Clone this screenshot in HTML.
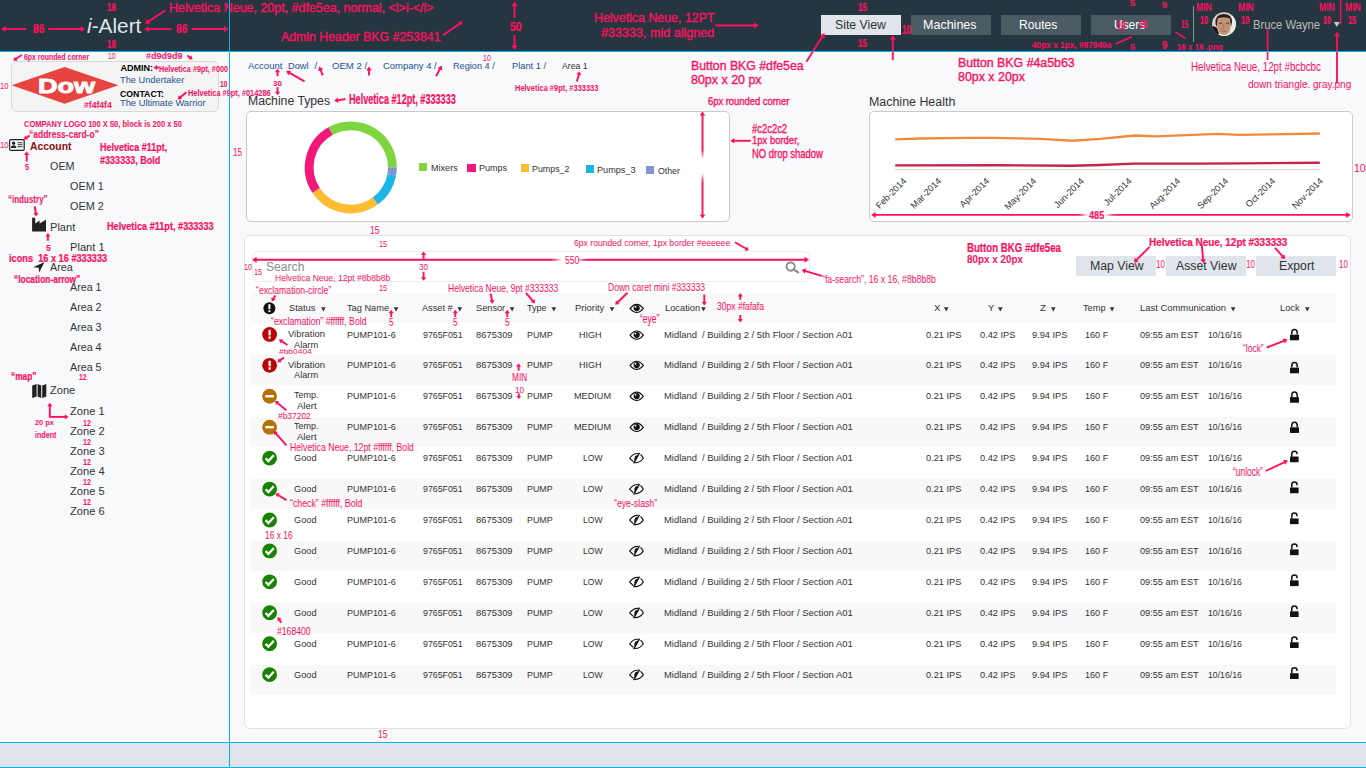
<!DOCTYPE html>
<html><head><meta charset="utf-8"><title>i-Alert redline</title>
<style>
html,body{margin:0;padding:0;width:1366px;height:768px;overflow:hidden;background:#f8f9fb;}
body{position:relative;font-family:"Liberation Sans",sans-serif;}
.t{position:absolute;white-space:pre;line-height:1;transform-origin:0 0;z-index:2;}
.b{position:absolute;}
.dow{-webkit-text-stroke:0.9px #fff;}
.med{-webkit-text-stroke:0.35px currentColor;}
.bd{-webkit-text-stroke:0.2px currentColor;}
svg.ov{position:absolute;left:0;top:0;width:1366px;height:768px;}

</style></head><body>
<svg class="ov" style="z-index:1" width="1366" height="768" viewBox="0 0 1366 768">
<defs><clipPath id="av"><circle cx="1224" cy="24.1" r="11.9"/></clipPath></defs>
<g clip-path="url(#av)">
<rect x="1211" y="11" width="27" height="27" fill="#d9d6d2"/>
<path d="M1236 12 L1236 36 L1230 36 L1231 16 Z" fill="#ecebe6"/>
<path d="M1211 27 Q1214 25 1217 28 L1220 37 L1211 37 Z" fill="#151515"/>
<path d="M1215.5 24 Q1214.5 14.5 1223.5 14 Q1232 14 1232 22 L1231 27 L1229.5 18.5 Q1224 16.5 1218 18.5 L1217 27 Z" fill="#2a1f1a"/>
<path d="M1217.5 19 Q1224 16.8 1230 19 L1230.5 27 Q1230 33.5 1224 35.5 Q1218 33.5 1217.3 27 Z" fill="#c39272"/>
<path d="M1219 23.3 h3.2 M1226 23.3 h3.2" stroke="#5a3f33" stroke-width="1.1"/>
<path d="M1223.8 24 L1223.2 28.5 L1225 28.6" fill="none" stroke="#a8735a" stroke-width="0.7"/>
<path d="M1221.5 31 Q1224 32 1226.5 31" fill="none" stroke="#9a5f4f" stroke-width="0.8"/>
<path d="M1217 37 L1219.5 33.5 Q1224 36.5 1229 33.5 L1231 37 Z" fill="#f4f4f2"/>
</g>
<polygon points="1333.8,22 1339.8,22 1336.8,27" fill="#c9c9c9"/>
<polygon points="11.6,85.3 64.6,66.9 118.4,85.3 64.6,103.8" fill="#e8433f"/>
<rect x="9.6" y="139.6" width="14.6" height="10.8" rx="1.2" fill="none" stroke="#222" stroke-width="1.2"/>
<circle cx="13.6" cy="143.2" r="1.6" fill="#222"/><path d="M10.9 148 Q11 145.3 13.6 145.3 Q16.2 145.3 16.3 148 Z" fill="#222"/>
<rect x="17.5" y="142.3" width="5" height="0.9" fill="#222"/><rect x="17.5" y="144.3" width="5" height="0.9" fill="#222"/><rect x="17.5" y="146.3" width="5" height="0.9" fill="#222"/>
<path d="M32.1 231.5 L32.1 217.8 L35.2 217.8 L35.2 223.5 L39.6 220.6 L39.6 223.5 L46 219.8 L46 231.5 Z" fill="#222"/>
<path d="M44.5 262 L33.2 267.2 L38.6 267.8 L39.2 272.6 Z" fill="#222"/>
<path d="M32.2 385.5 L36.6 384 L36.6 396.5 L32.2 398 Z M37.6 384 L41.2 385.4 L41.2 398 L37.6 396.6 Z M42.2 385.4 L46.3 384 L46.3 396.6 L42.2 398 Z" fill="#222"/>
<path d="M330.63 131.02 A41.6 41.6 0 0 1 392.40 167.40" fill="none" stroke="#7ed63f" stroke-width="8.8"/>
<path d="M392.40 167.40 A41.6 41.6 0 0 1 391.70 174.98" fill="none" stroke="#8294d2" stroke-width="8.8"/>
<path d="M391.70 174.98 A41.6 41.6 0 0 1 375.25 201.06" fill="none" stroke="#1cb6e6" stroke-width="8.8"/>
<path d="M375.25 201.06 A41.6 41.6 0 0 1 316.11 190.36" fill="none" stroke="#fcbd33" stroke-width="8.8"/>
<path d="M316.11 190.36 A41.6 41.6 0 0 1 330.63 131.02" fill="none" stroke="#f2187a" stroke-width="8.8"/>
<polyline points="895.2,139.4 920,138.5 969.3,137.9 993,137.9 1040.7,138.9 1072.7,140.7 1100,138.9 1135.2,135.5 1155.2,136.4 1218,133.9 1239,134.9 1319.8,133.5" fill="none" stroke="#f28a3e" stroke-width="2.4" stroke-linejoin="round"/>
<polyline points="895.2,165.4 1000,165.2 1072,165.8 1100,165 1134,163.6 1200,163.6 1240,163.4 1319.8,162.8" fill="none" stroke="#c4234a" stroke-width="2.4" stroke-linejoin="round"/>
<text x="903.5" y="176.7" transform="rotate(-45 903.5 176.7)" text-anchor="end" font-family="Liberation Sans" font-size="9.1" fill="#333" dx="-1" dy="6">Feb-2014</text>
<text x="938.3" y="176.7" transform="rotate(-45 938.3 176.7)" text-anchor="end" font-family="Liberation Sans" font-size="9.1" fill="#333" dx="-1" dy="6">Mar-2014</text>
<text x="986.3" y="176.7" transform="rotate(-45 986.3 176.7)" text-anchor="end" font-family="Liberation Sans" font-size="9.1" fill="#333" dx="-1" dy="6">Apr-2014</text>
<text x="1033.3" y="176.7" transform="rotate(-45 1033.3 176.7)" text-anchor="end" font-family="Liberation Sans" font-size="9.1" fill="#333" dx="-1" dy="6">May-2014</text>
<text x="1081.0" y="176.7" transform="rotate(-45 1081.0 176.7)" text-anchor="end" font-family="Liberation Sans" font-size="9.1" fill="#333" dx="-1" dy="6">Jun-2014</text>
<text x="1128.7" y="176.7" transform="rotate(-45 1128.7 176.7)" text-anchor="end" font-family="Liberation Sans" font-size="9.1" fill="#333" dx="-1" dy="6">Jul-2014</text>
<text x="1177.3" y="176.7" transform="rotate(-45 1177.3 176.7)" text-anchor="end" font-family="Liberation Sans" font-size="9.1" fill="#333" dx="-1" dy="6">Aug-2014</text>
<text x="1225.3" y="176.7" transform="rotate(-45 1225.3 176.7)" text-anchor="end" font-family="Liberation Sans" font-size="9.1" fill="#333" dx="-1" dy="6">Sep-2014</text>
<text x="1272.3" y="176.7" transform="rotate(-45 1272.3 176.7)" text-anchor="end" font-family="Liberation Sans" font-size="9.1" fill="#333" dx="-1" dy="6">Oct-2014</text>
<text x="1320.0" y="176.7" transform="rotate(-45 1320.0 176.7)" text-anchor="end" font-family="Liberation Sans" font-size="9.1" fill="#333" dx="-1" dy="6">Nov-2014</text>
<circle cx="790.6" cy="266.6" r="4.1" fill="none" stroke="#8b8b8b" stroke-width="1.9"/><line x1="793.6" y1="269.6" x2="798.2" y2="272.4" stroke="#8b8b8b" stroke-width="2.2" stroke-linecap="round"/>
<circle cx="269.4" cy="308.3" r="6" fill="#111"/><rect x="268.4" y="304.2" width="2" height="5" fill="#fff"/><rect x="268.4" y="310.3" width="2" height="1.8" fill="#fff"/>
<polygon points="321.1,307.2 325.7,307.2 323.4,311.4" fill="#333"/>
<polygon points="393.8,307.2 398.4,307.2 396.1,311.4" fill="#333"/>
<polygon points="457.5,307.2 462.1,307.2 459.8,311.4" fill="#333"/>
<polygon points="509.8,307.2 514.4,307.2 512.1,311.4" fill="#333"/>
<polygon points="551.5,307.2 556.1,307.2 553.8,311.4" fill="#333"/>
<polygon points="609.7,307.2 614.3,307.2 612.0,311.4" fill="#333"/>
<polygon points="701.2,307.2 705.8,307.2 703.5,311.4" fill="#333"/>
<polygon points="943.9,307.2 948.5,307.2 946.2,311.4" fill="#333"/>
<polygon points="998.0,307.2 1002.6,307.2 1000.3,311.4" fill="#333"/>
<polygon points="1051.0,307.2 1055.6,307.2 1053.3,311.4" fill="#333"/>
<polygon points="1109.8,307.2 1114.4,307.2 1112.1,311.4" fill="#333"/>
<polygon points="1230.8,307.2 1235.4,307.2 1233.1,311.4" fill="#333"/>
<polygon points="1305.0,307.2 1309.6,307.2 1307.3,311.4" fill="#333"/>
<path d="M630.1 308.4 Q636.7 300.2 643.3000000000001 308.4 Q636.7 316.59999999999997 630.1 308.4 Z" fill="none" stroke="#111" stroke-width="1.2"/><circle cx="636.7" cy="308.09999999999997" r="3.1" fill="#111"/><circle cx="635.5" cy="306.9" r="0.9" fill="#fff"/>
<circle cx="269.6" cy="334.40" r="7.4" fill="#bb0404"/><rect x="268.5" y="329.80" width="2.3" height="5.6" fill="#fff"/><rect x="268.5" y="336.40" width="2.3" height="2.3" fill="#fff"/>
<path d="M630.1 335.1 Q636.7 326.90000000000003 643.3000000000001 335.1 Q636.7 343.3 630.1 335.1 Z" fill="none" stroke="#111" stroke-width="1.2"/><circle cx="636.7" cy="334.8" r="3.1" fill="#111"/><circle cx="635.5" cy="333.6" r="0.9" fill="#fff"/>
<path d="M1291.8 334.50 L1291.8 332.70 Q1291.8 329.50 1294.5 329.50 Q1297.2 329.50 1297.2 332.70 L1297.2 334.50" fill="none" stroke="#111" stroke-width="1.5"/><rect x="1290" y="334.70" width="9" height="5.6" fill="#111"/>
<circle cx="269.6" cy="365.33" r="7.4" fill="#bb0404"/><rect x="268.5" y="360.73" width="2.3" height="5.6" fill="#fff"/><rect x="268.5" y="367.33" width="2.3" height="2.3" fill="#fff"/>
<path d="M630.1 365.36 Q636.7 357.16 643.3000000000001 365.36 Q636.7 373.56 630.1 365.36 Z" fill="none" stroke="#111" stroke-width="1.2"/><circle cx="636.7" cy="365.06" r="3.1" fill="#111"/><circle cx="635.5" cy="363.86" r="0.9" fill="#fff"/>
<path d="M1291.8 367.46 L1291.8 365.66 Q1291.8 362.46 1294.5 362.46 Q1297.2 362.46 1297.2 365.66 L1297.2 367.46" fill="none" stroke="#111" stroke-width="1.5"/><rect x="1290" y="367.66" width="9" height="5.6" fill="#111"/>
<circle cx="269.6" cy="396.26" r="7.4" fill="#b37202"/><rect x="265.4" y="395.06" width="8.4" height="2.4" fill="#fff"/>
<path d="M630.1 396.32000000000005 Q636.7 388.12000000000006 643.3000000000001 396.32000000000005 Q636.7 404.52000000000004 630.1 396.32000000000005 Z" fill="none" stroke="#111" stroke-width="1.2"/><circle cx="636.7" cy="396.02000000000004" r="3.1" fill="#111"/><circle cx="635.5" cy="394.82000000000005" r="0.9" fill="#fff"/>
<path d="M1291.8 396.92 L1291.8 395.12 Q1291.8 391.92 1294.5 391.92 Q1297.2 391.92 1297.2 395.12 L1297.2 396.92" fill="none" stroke="#111" stroke-width="1.5"/><rect x="1290" y="397.12" width="9" height="5.6" fill="#111"/>
<circle cx="269.6" cy="427.19" r="7.4" fill="#b37202"/><rect x="265.4" y="425.99" width="8.4" height="2.4" fill="#fff"/>
<path d="M630.1 427.28000000000003 Q636.7 419.08000000000004 643.3000000000001 427.28000000000003 Q636.7 435.48 630.1 427.28000000000003 Z" fill="none" stroke="#111" stroke-width="1.2"/><circle cx="636.7" cy="426.98" r="3.1" fill="#111"/><circle cx="635.5" cy="425.78000000000003" r="0.9" fill="#fff"/>
<path d="M1291.8 427.13 L1291.8 425.33 Q1291.8 422.13 1294.5 422.13 Q1297.2 422.13 1297.2 425.33 L1297.2 427.13" fill="none" stroke="#111" stroke-width="1.5"/><rect x="1290" y="427.33" width="9" height="5.6" fill="#111"/>
<circle cx="269.6" cy="458.12" r="7.4" fill="#168400"/><path d="M265.6 458.32 L268.4 461.12 L273.8 455.32" fill="none" stroke="#fff" stroke-width="2.3"/>
<path d="M637.90 453.54 Q633.20 453.24 629.70 458.24 L633.30 461.64 M640.50 454.54 Q642.30 455.84 643.30 458.24 Q639.70 463.14 634.50 462.74" fill="none" stroke="#111" stroke-width="1.15"/><path d="M639.50 452.84 L633.60 463.34" stroke="#111" stroke-width="1.4"/><path d="M635.50 455.64 Q633.30 458.24 634.60 461.04 L638.20 454.94 Z" fill="#111"/>
<path d="M1291.8 456.64 L1291.8 453.64 Q1291.8 451.14 1294.4 451.14 Q1297 451.14 1297 453.64 L1297 454.34" fill="none" stroke="#111" stroke-width="1.5"/><rect x="1290" y="456.54" width="8.6" height="5.7" fill="#111"/>
<circle cx="269.6" cy="489.05" r="7.4" fill="#168400"/><path d="M265.6 489.25 L268.4 492.05 L273.8 486.25" fill="none" stroke="#fff" stroke-width="2.3"/>
<path d="M637.90 484.50 Q633.20 484.20 629.70 489.20 L633.30 492.60 M640.50 485.50 Q642.30 486.80 643.30 489.20 Q639.70 494.10 634.50 493.70" fill="none" stroke="#111" stroke-width="1.15"/><path d="M639.50 483.80 L633.60 494.30" stroke="#111" stroke-width="1.4"/><path d="M635.50 486.60 Q633.30 489.20 634.60 492.00 L638.20 485.90 Z" fill="#111"/>
<path d="M1291.8 487.60 L1291.8 484.60 Q1291.8 482.10 1294.4 482.10 Q1297 482.10 1297 484.60 L1297 485.30" fill="none" stroke="#111" stroke-width="1.5"/><rect x="1290" y="487.50" width="8.6" height="5.7" fill="#111"/>
<circle cx="269.6" cy="519.98" r="7.4" fill="#168400"/><path d="M265.6 520.18 L268.4 522.98 L273.8 517.18" fill="none" stroke="#fff" stroke-width="2.3"/>
<path d="M637.90 515.46 Q633.20 515.16 629.70 520.16 L633.30 523.56 M640.50 516.46 Q642.30 517.76 643.30 520.16 Q639.70 525.06 634.50 524.66" fill="none" stroke="#111" stroke-width="1.15"/><path d="M639.50 514.76 L633.60 525.26" stroke="#111" stroke-width="1.4"/><path d="M635.50 517.56 Q633.30 520.16 634.60 522.96 L638.20 516.86 Z" fill="#111"/>
<path d="M1291.8 518.56 L1291.8 515.56 Q1291.8 513.06 1294.4 513.06 Q1297 513.06 1297 515.56 L1297 516.26" fill="none" stroke="#111" stroke-width="1.5"/><rect x="1290" y="518.46" width="8.6" height="5.7" fill="#111"/>
<circle cx="269.6" cy="550.91" r="7.4" fill="#168400"/><path d="M265.6 551.11 L268.4 553.91 L273.8 548.11" fill="none" stroke="#fff" stroke-width="2.3"/>
<path d="M637.90 546.42 Q633.20 546.12 629.70 551.12 L633.30 554.52 M640.50 547.42 Q642.30 548.72 643.30 551.12 Q639.70 556.02 634.50 555.62" fill="none" stroke="#111" stroke-width="1.15"/><path d="M639.50 545.72 L633.60 556.22" stroke="#111" stroke-width="1.4"/><path d="M635.50 548.52 Q633.30 551.12 634.60 553.92 L638.20 547.82 Z" fill="#111"/>
<path d="M1291.8 549.52 L1291.8 546.52 Q1291.8 544.02 1294.4 544.02 Q1297 544.02 1297 546.52 L1297 547.22" fill="none" stroke="#111" stroke-width="1.5"/><rect x="1290" y="549.42" width="8.6" height="5.7" fill="#111"/>
<circle cx="269.6" cy="581.84" r="7.4" fill="#168400"/><path d="M265.6 582.04 L268.4 584.84 L273.8 579.04" fill="none" stroke="#fff" stroke-width="2.3"/>
<path d="M637.90 577.38 Q633.20 577.08 629.70 582.08 L633.30 585.48 M640.50 578.38 Q642.30 579.68 643.30 582.08 Q639.70 586.98 634.50 586.58" fill="none" stroke="#111" stroke-width="1.15"/><path d="M639.50 576.68 L633.60 587.18" stroke="#111" stroke-width="1.4"/><path d="M635.50 579.48 Q633.30 582.08 634.60 584.88 L638.20 578.78 Z" fill="#111"/>
<path d="M1291.8 580.48 L1291.8 577.48 Q1291.8 574.98 1294.4 574.98 Q1297 574.98 1297 577.48 L1297 578.18" fill="none" stroke="#111" stroke-width="1.5"/><rect x="1290" y="580.38" width="8.6" height="5.7" fill="#111"/>
<circle cx="269.6" cy="612.77" r="7.4" fill="#168400"/><path d="M265.6 612.97 L268.4 615.77 L273.8 609.97" fill="none" stroke="#fff" stroke-width="2.3"/>
<path d="M637.90 608.34 Q633.20 608.04 629.70 613.04 L633.30 616.44 M640.50 609.34 Q642.30 610.64 643.30 613.04 Q639.70 617.94 634.50 617.54" fill="none" stroke="#111" stroke-width="1.15"/><path d="M639.50 607.64 L633.60 618.14" stroke="#111" stroke-width="1.4"/><path d="M635.50 610.44 Q633.30 613.04 634.60 615.84 L638.20 609.74 Z" fill="#111"/>
<path d="M1291.8 611.44 L1291.8 608.44 Q1291.8 605.94 1294.4 605.94 Q1297 605.94 1297 608.44 L1297 609.14" fill="none" stroke="#111" stroke-width="1.5"/><rect x="1290" y="611.34" width="8.6" height="5.7" fill="#111"/>
<circle cx="269.6" cy="643.70" r="7.4" fill="#168400"/><path d="M265.6 643.90 L268.4 646.70 L273.8 640.90" fill="none" stroke="#fff" stroke-width="2.3"/>
<path d="M637.90 639.30 Q633.20 639.00 629.70 644.00 L633.30 647.40 M640.50 640.30 Q642.30 641.60 643.30 644.00 Q639.70 648.90 634.50 648.50" fill="none" stroke="#111" stroke-width="1.15"/><path d="M639.50 638.60 L633.60 649.10" stroke="#111" stroke-width="1.4"/><path d="M635.50 641.40 Q633.30 644.00 634.60 646.80 L638.20 640.70 Z" fill="#111"/>
<path d="M1291.8 642.40 L1291.8 639.40 Q1291.8 636.90 1294.4 636.90 Q1297 636.90 1297 639.40 L1297 640.10" fill="none" stroke="#111" stroke-width="1.5"/><rect x="1290" y="642.30" width="8.6" height="5.7" fill="#111"/>
<circle cx="269.6" cy="674.63" r="7.4" fill="#168400"/><path d="M265.6 674.83 L268.4 677.63 L273.8 671.83" fill="none" stroke="#fff" stroke-width="2.3"/>
<path d="M637.90 670.26 Q633.20 669.96 629.70 674.96 L633.30 678.36 M640.50 671.26 Q642.30 672.56 643.30 674.96 Q639.70 679.86 634.50 679.46" fill="none" stroke="#111" stroke-width="1.15"/><path d="M639.50 669.56 L633.60 680.06" stroke="#111" stroke-width="1.4"/><path d="M635.50 672.36 Q633.30 674.96 634.60 677.76 L638.20 671.66 Z" fill="#111"/>
<path d="M1291.8 673.36 L1291.8 670.36 Q1291.8 667.86 1294.4 667.86 Q1297 667.86 1297 670.36 L1297 671.06" fill="none" stroke="#111" stroke-width="1.5"/><rect x="1290" y="673.26" width="8.6" height="5.7" fill="#111"/>
</svg>
<div class="b" style="left:0px;top:0px;width:1366px;height:51px;background:#263640;"></div>
<div class="b" style="left:0px;top:52px;width:229px;height:690px;background:#f8f9fb;"></div>
<div class="b" style="left:230px;top:52px;width:1136px;height:690px;background:#f8f9fb;"></div>
<div class="b" style="left:0px;top:743px;width:1366px;height:24px;background:#dfe3ea;"></div>
<div class="t" id="t4" style="left:87.40px;top:16.24px;font-size:20.5px;color:#dfe5ea;transform:scaleX(1.0159);"><i>i</i>-Alert</div>
<div class="b" style="left:821px;top:15px;width:80px;height:20px;background:#dfe5ea;"></div>
<div class="t" id="t6" style="left:834.80px;top:17.79px;font-size:13px;color:#333;transform:scaleX(0.9450);">Site View</div>
<div class="b" style="left:911px;top:15px;width:80px;height:20px;background:#4a5b63;"></div>
<div class="t" id="t8" style="left:922.60px;top:17.79px;font-size:13px;color:#fff;transform:scaleX(0.9633);">Machines</div>
<div class="b" style="left:1001px;top:15px;width:80px;height:20px;background:#4a5b63;"></div>
<div class="t" id="t10" style="left:1018.50px;top:17.79px;font-size:13px;color:#fff;transform:scaleX(0.9295);">Routes</div>
<div class="b" style="left:1091px;top:15px;width:80px;height:20px;background:#4a5b63;"></div>
<div class="t" id="t12" style="left:1113.80px;top:17.79px;font-size:13px;color:#fff;transform:scaleX(0.9189);">Users</div>
<div class="b" style="left:1193px;top:6px;width:1px;height:36px;background:#87949a;"></div>
<div class="t" id="t14" style="left:1253.40px;top:18.54px;font-size:12px;color:#bcbcbc;transform:scaleX(0.9358);">Bruce Wayne</div>
<div class="b" style="left:10.5px;top:60.5px;width:208px;height:51px;background:#f4f4f4;border-radius:6px;border:1px solid #d9d9d9;box-sizing:border-box;"></div>
<div class="t dow" id="t16" style="left:37.90px;top:75.42px;font-size:21px;color:#fff;font-weight:700;transform:scaleX(1.2904);">Dow</div>
<div class="t" id="t17" style="left:120.50px;top:64.48px;font-size:9px;color:#000;font-weight:700;transform:scaleX(1.0000);">ADMIN:</div>
<div class="t" id="t18" style="left:120.40px;top:75.53px;font-size:9.3px;color:#1d5293;transform:scaleX(0.9955);">The Undertaker</div>
<div class="t" id="t19" style="left:120.20px;top:90.38px;font-size:9px;color:#000;font-weight:700;transform:scaleX(0.9707);">CONTACT:</div>
<div class="t" id="t20" style="left:120.40px;top:99.33px;font-size:9.3px;color:#1d5293;transform:scaleX(1.0023);">The Ultimate Warrior</div>
<div class="t" id="t21" style="left:30.20px;top:141.09px;font-size:11px;color:#8a1010;font-weight:700;transform:scaleX(0.9432);">Account</div>
<div class="t" id="t22" style="left:49.90px;top:161.09px;font-size:11px;color:#333;transform:scaleX(0.9815);">OEM</div>
<div class="t" id="t23" style="left:69.90px;top:180.99px;font-size:11px;color:#333;transform:scaleX(0.9844);">OEM 1</div>
<div class="t" id="t24" style="left:69.90px;top:201.09px;font-size:11px;color:#333;transform:scaleX(0.9844);">OEM 2</div>
<div class="t" id="t25" style="left:50.40px;top:222.09px;font-size:11px;color:#333;transform:scaleX(1.0088);">Plant</div>
<div class="t" id="t26" style="left:70.30px;top:242.09px;font-size:11px;color:#333;transform:scaleX(1.0102);">Plant 1</div>
<div class="t" id="t27" style="left:50.40px;top:262.09px;font-size:11px;color:#333;transform:scaleX(0.9806);">Area</div>
<div class="t" id="t28" style="left:70.30px;top:282.19px;font-size:11px;color:#333;transform:scaleX(0.9716);">Area 1</div>
<div class="t" id="t29" style="left:70.30px;top:302.19px;font-size:11px;color:#333;transform:scaleX(0.9716);">Area 2</div>
<div class="t" id="t30" style="left:70.30px;top:322.19px;font-size:11px;color:#333;transform:scaleX(0.9716);">Area 3</div>
<div class="t" id="t31" style="left:70.30px;top:342.19px;font-size:11px;color:#333;transform:scaleX(0.9716);">Area 4</div>
<div class="t" id="t32" style="left:70.30px;top:361.99px;font-size:11px;color:#333;transform:scaleX(0.9716);">Area 5</div>
<div class="t" id="t33" style="left:50.40px;top:385.39px;font-size:11px;color:#333;transform:scaleX(1.0049);">Zone</div>
<div class="t" id="t34" style="left:69.90px;top:406.29px;font-size:11px;color:#333;transform:scaleX(1.0102);">Zone 1</div>
<div class="t" id="t35" style="left:69.90px;top:426.24px;font-size:11px;color:#333;transform:scaleX(1.0102);">Zone 2</div>
<div class="t" id="t36" style="left:69.90px;top:446.19px;font-size:11px;color:#333;transform:scaleX(1.0102);">Zone 3</div>
<div class="t" id="t37" style="left:69.90px;top:466.14px;font-size:11px;color:#333;transform:scaleX(1.0102);">Zone 4</div>
<div class="t" id="t38" style="left:69.90px;top:486.09px;font-size:11px;color:#333;transform:scaleX(1.0102);">Zone 5</div>
<div class="t" id="t39" style="left:69.90px;top:506.04px;font-size:11px;color:#333;transform:scaleX(1.0102);">Zone 6</div>
<div class="t" id="t40" style="left:248.20px;top:61.46px;font-size:9.5px;color:#22528f;transform:scaleX(1.0021);">Account</div>
<div class="t" id="t41" style="left:288.40px;top:61.46px;font-size:9.5px;color:#22528f;transform:scaleX(0.9704);">Dowl</div>
<div class="t" id="t42" style="left:314.60px;top:61.46px;font-size:9.5px;color:#22528f;">/</div>
<div class="t" id="t43" style="left:331.60px;top:61.46px;font-size:9.5px;color:#22528f;transform:scaleX(1.0102);">OEM 2 /</div>
<div class="t" id="t44" style="left:383.30px;top:61.46px;font-size:9.5px;color:#22528f;transform:scaleX(0.9968);">Company 4 /</div>
<div class="t" id="t45" style="left:453.40px;top:61.46px;font-size:9.5px;color:#22528f;transform:scaleX(0.9651);">Region 4 /</div>
<div class="t" id="t46" style="left:512.30px;top:61.46px;font-size:9.5px;color:#22528f;transform:scaleX(0.9782);">Plant 1 /</div>
<div class="t" id="t47" style="left:561.80px;top:61.46px;font-size:9.5px;color:#333;transform:scaleX(0.9143);">Area 1</div>
<div class="t" id="t48" style="left:247.90px;top:94.99px;font-size:12.3px;color:#333;transform:scaleX(0.9941);">Machine Types</div>
<div class="t" id="t49" style="left:869.30px;top:95.59px;font-size:12.3px;color:#333;transform:scaleX(1.0099);">Machine Health</div>
<div class="b" style="left:246px;top:111px;width:484px;height:111px;background:#fff;border-radius:5px;border:1px solid #c9c9c9;box-sizing:border-box;"></div>
<div class="b" style="left:869px;top:111px;width:484px;height:111px;background:#fff;border-radius:5px;border:1px solid #c9c9c9;box-sizing:border-box;"></div>
<div class="b" style="left:419.2px;top:163.3px;width:8.2px;height:8px;background:#7ed63f;"></div>
<div class="t" id="t53" style="left:431.10px;top:163.10px;font-size:9.8px;color:#333;transform:scaleX(0.9252);">Mixers</div>
<div class="b" style="left:467.4px;top:163.5px;width:8.2px;height:8px;background:#f2187a;"></div>
<div class="t" id="t55" style="left:479.30px;top:163.30px;font-size:9.8px;color:#333;transform:scaleX(0.9213);">Pumps</div>
<div class="b" style="left:520.7px;top:163.7px;width:8.2px;height:8px;background:#fcbd33;"></div>
<div class="t" id="t57" style="left:532.40px;top:163.90px;font-size:9.8px;color:#333;transform:scaleX(0.9060);">Pumps_2</div>
<div class="b" style="left:585.6px;top:165.4px;width:8.2px;height:8px;background:#1cb6e6;"></div>
<div class="t" id="t59" style="left:597.00px;top:165.40px;font-size:9.8px;color:#333;transform:scaleX(0.9302);">Pumps_3</div>
<div class="b" style="left:645.7px;top:166.4px;width:8.2px;height:8px;background:#8294d2;"></div>
<div class="t" id="t61" style="left:657.60px;top:166.40px;font-size:9.8px;color:#333;transform:scaleX(0.8933);">Other</div>
<div class="b" style="left:895px;top:169px;width:425px;height:1px;background:#d6d6d6;"></div>
<div class="b" style="left:243.5px;top:234.5px;width:1107px;height:494px;background:#fff;border-radius:6px;border:1px solid #e3e3e3;box-sizing:border-box;"></div>
<div class="b" style="left:252px;top:251.2px;width:557.5px;height:31px;background:#fff;border-radius:6px;border:1px solid #ececec;box-sizing:border-box;"></div>
<div class="t" id="t65" style="left:266.20px;top:260.64px;font-size:12px;color:#8b8b8b;transform:scaleX(1.0097);">Search</div>
<div class="b" style="left:1076px;top:256px;width:80px;height:20px;background:#dfe5ea;"></div>
<div class="t" id="t67" style="left:1089.65px;top:260.12px;font-size:12.5px;color:#333;transform:scaleX(0.9822);">Map View</div>
<div class="b" style="left:1166px;top:256px;width:80px;height:20px;background:#dfe5ea;"></div>
<div class="t" id="t69" style="left:1176.25px;top:260.12px;font-size:12.5px;color:#333;transform:scaleX(0.9820);">Asset View</div>
<div class="b" style="left:1256px;top:256px;width:80px;height:20px;background:#dfe5ea;"></div>
<div class="t" id="t71" style="left:1278.80px;top:260.12px;font-size:12.5px;color:#333;transform:scaleX(0.9795);">Export</div>
<div class="b" style="left:249.7px;top:293px;width:1086px;height:30px;background:#f9f9f9;"></div>
<div class="t" id="t73" style="left:289.10px;top:303.26px;font-size:9.5px;color:#333;transform:scaleX(0.9838);">Status</div>
<div class="t" id="t74" style="left:346.70px;top:303.26px;font-size:9.5px;color:#333;transform:scaleX(0.9720);">Tag Name</div>
<div class="t" id="t75" style="left:422.30px;top:303.26px;font-size:9.5px;color:#333;transform:scaleX(0.9657);">Asset #</div>
<div class="t" id="t76" style="left:475.60px;top:303.26px;font-size:9.5px;color:#333;transform:scaleX(0.9698);">Sensor</div>
<div class="t" id="t77" style="left:527.30px;top:303.26px;font-size:9.5px;color:#333;transform:scaleX(0.9510);">Type</div>
<div class="t" id="t78" style="left:575.30px;top:303.26px;font-size:9.5px;color:#333;transform:scaleX(0.9911);">Priority</div>
<div class="t" id="t79" style="left:664.60px;top:303.26px;font-size:9.5px;color:#333;transform:scaleX(0.9799);">Location</div>
<div class="t" id="t80" style="left:934.20px;top:303.26px;font-size:9.5px;color:#333;transform:scaleX(1.0246);">X</div>
<div class="t" id="t81" style="left:988.20px;top:303.26px;font-size:9.5px;color:#333;transform:scaleX(0.9773);">Y</div>
<div class="t" id="t82" style="left:1040.00px;top:303.26px;font-size:9.5px;color:#333;transform:scaleX(1.0323);">Z</div>
<div class="t" id="t83" style="left:1082.50px;top:303.26px;font-size:9.5px;color:#333;transform:scaleX(0.9684);">Temp</div>
<div class="t" id="t84" style="left:1140.20px;top:303.26px;font-size:9.5px;color:#333;transform:scaleX(0.9930);">Last Communication</div>
<div class="t" id="t85" style="left:1280.30px;top:303.26px;font-size:9.5px;color:#333;transform:scaleX(0.9812);">Lock</div>
<div class="t" id="t86" style="left:287.80px;top:329.26px;font-size:9.5px;color:#333;transform:scaleX(0.9912);">Vibration</div>
<div class="t" id="t87" style="left:294.25px;top:339.76px;font-size:9.5px;color:#333;transform:scaleX(0.9713);">Alarm</div>
<div class="t" id="t88" style="left:347.30px;top:330.16px;font-size:9.5px;color:#333;transform:scaleX(0.9430);">PUMP101-6</div>
<div class="t" id="t89" style="left:423.00px;top:330.16px;font-size:9.5px;color:#333;transform:scaleX(0.9253);">9765F051</div>
<div class="t" id="t90" style="left:475.60px;top:330.16px;font-size:9.5px;color:#333;transform:scaleX(0.9896);">8675309</div>
<div class="t" id="t91" style="left:527.30px;top:330.16px;font-size:9.5px;color:#333;transform:scaleX(0.9361);">PUMP</div>
<div class="t" id="t92" style="left:579.35px;top:330.16px;font-size:9.5px;color:#333;transform:scaleX(0.9474);">HIGH</div>
<div class="t" id="t93" style="left:664.20px;top:330.16px;font-size:9.5px;color:#333;transform:scaleX(0.9915);">Midland</div>
<div class="t" id="t94" style="left:702.30px;top:330.16px;font-size:9.5px;color:#333;transform:scaleX(0.9984);">/ Building 2 / 5th Floor / Section A01</div>
<div class="t" id="t95" style="left:926.00px;top:330.16px;font-size:9.5px;color:#333;transform:scaleX(0.9684);">0.21 IPS</div>
<div class="t" id="t96" style="left:980.00px;top:330.16px;font-size:9.5px;color:#333;transform:scaleX(0.9684);">0.42 IPS</div>
<div class="t" id="t97" style="left:1032.10px;top:330.16px;font-size:9.5px;color:#333;transform:scaleX(0.9711);">9.94 IPS</div>
<div class="t" id="t98" style="left:1085.40px;top:330.16px;font-size:9.5px;color:#333;transform:scaleX(0.9549);">160 F</div>
<div class="t" id="t99" style="left:1140.20px;top:330.16px;font-size:9.5px;color:#333;transform:scaleX(0.9665);">09:55 am EST</div>
<div class="t" id="t100" style="left:1208.20px;top:330.16px;font-size:9.5px;color:#333;transform:scaleX(0.9166);">10/16/16</div>
<div class="b" style="left:249.7px;top:354.6px;width:1086px;height:30.2px;background:#f8f8f8;"></div>
<div class="t" id="t102" style="left:287.80px;top:359.52px;font-size:9.5px;color:#333;transform:scaleX(0.9912);">Vibration</div>
<div class="t" id="t103" style="left:294.25px;top:370.02px;font-size:9.5px;color:#333;transform:scaleX(0.9713);">Alarm</div>
<div class="t" id="t104" style="left:347.30px;top:360.42px;font-size:9.5px;color:#333;transform:scaleX(0.9430);">PUMP101-6</div>
<div class="t" id="t105" style="left:423.00px;top:360.42px;font-size:9.5px;color:#333;transform:scaleX(0.9253);">9765F051</div>
<div class="t" id="t106" style="left:475.60px;top:360.42px;font-size:9.5px;color:#333;transform:scaleX(0.9896);">8675309</div>
<div class="t" id="t107" style="left:527.30px;top:360.42px;font-size:9.5px;color:#333;transform:scaleX(0.9361);">PUMP</div>
<div class="t" id="t108" style="left:579.35px;top:360.42px;font-size:9.5px;color:#333;transform:scaleX(0.9474);">HIGH</div>
<div class="t" id="t109" style="left:664.20px;top:360.42px;font-size:9.5px;color:#333;transform:scaleX(0.9915);">Midland</div>
<div class="t" id="t110" style="left:702.30px;top:360.42px;font-size:9.5px;color:#333;transform:scaleX(0.9984);">/ Building 2 / 5th Floor / Section A01</div>
<div class="t" id="t111" style="left:926.00px;top:360.42px;font-size:9.5px;color:#333;transform:scaleX(0.9684);">0.21 IPS</div>
<div class="t" id="t112" style="left:980.00px;top:360.42px;font-size:9.5px;color:#333;transform:scaleX(0.9684);">0.42 IPS</div>
<div class="t" id="t113" style="left:1032.10px;top:360.42px;font-size:9.5px;color:#333;transform:scaleX(0.9711);">9.94 IPS</div>
<div class="t" id="t114" style="left:1085.40px;top:360.42px;font-size:9.5px;color:#333;transform:scaleX(0.9549);">160 F</div>
<div class="t" id="t115" style="left:1140.20px;top:360.42px;font-size:9.5px;color:#333;transform:scaleX(0.9665);">09:55 am EST</div>
<div class="t" id="t116" style="left:1208.20px;top:360.42px;font-size:9.5px;color:#333;transform:scaleX(0.9166);">10/16/16</div>
<div class="t" id="t117" style="left:294.05px;top:390.48px;font-size:9.5px;color:#333;transform:scaleX(0.9469);">Temp.</div>
<div class="t" id="t118" style="left:296.50px;top:400.98px;font-size:9.5px;color:#333;transform:scaleX(1.0027);">Alert</div>
<div class="t" id="t119" style="left:347.30px;top:391.38px;font-size:9.5px;color:#333;transform:scaleX(0.9430);">PUMP101-6</div>
<div class="t" id="t120" style="left:423.00px;top:391.38px;font-size:9.5px;color:#333;transform:scaleX(0.9253);">9765F051</div>
<div class="t" id="t121" style="left:475.60px;top:391.38px;font-size:9.5px;color:#333;transform:scaleX(0.9896);">8675309</div>
<div class="t" id="t122" style="left:527.30px;top:391.38px;font-size:9.5px;color:#333;transform:scaleX(0.9361);">PUMP</div>
<div class="t" id="t123" style="left:574.00px;top:391.38px;font-size:9.5px;color:#333;transform:scaleX(0.9603);">MEDIUM</div>
<div class="t" id="t124" style="left:664.20px;top:391.38px;font-size:9.5px;color:#333;transform:scaleX(0.9915);">Midland</div>
<div class="t" id="t125" style="left:702.30px;top:391.38px;font-size:9.5px;color:#333;transform:scaleX(0.9984);">/ Building 2 / 5th Floor / Section A01</div>
<div class="t" id="t126" style="left:926.00px;top:391.38px;font-size:9.5px;color:#333;transform:scaleX(0.9684);">0.21 IPS</div>
<div class="t" id="t127" style="left:980.00px;top:391.38px;font-size:9.5px;color:#333;transform:scaleX(0.9684);">0.42 IPS</div>
<div class="t" id="t128" style="left:1032.10px;top:391.38px;font-size:9.5px;color:#333;transform:scaleX(0.9711);">9.94 IPS</div>
<div class="t" id="t129" style="left:1085.40px;top:391.38px;font-size:9.5px;color:#333;transform:scaleX(0.9549);">160 F</div>
<div class="t" id="t130" style="left:1140.20px;top:391.38px;font-size:9.5px;color:#333;transform:scaleX(0.9665);">09:55 am EST</div>
<div class="t" id="t131" style="left:1208.20px;top:391.38px;font-size:9.5px;color:#333;transform:scaleX(0.9166);">10/16/16</div>
<div class="b" style="left:249.7px;top:416.67px;width:1086px;height:30.2px;background:#f8f8f8;"></div>
<div class="t" id="t133" style="left:294.05px;top:421.44px;font-size:9.5px;color:#333;transform:scaleX(0.9469);">Temp.</div>
<div class="t" id="t134" style="left:296.50px;top:431.94px;font-size:9.5px;color:#333;transform:scaleX(1.0027);">Alert</div>
<div class="t" id="t135" style="left:347.30px;top:422.34px;font-size:9.5px;color:#333;transform:scaleX(0.9430);">PUMP101-6</div>
<div class="t" id="t136" style="left:423.00px;top:422.34px;font-size:9.5px;color:#333;transform:scaleX(0.9253);">9765F051</div>
<div class="t" id="t137" style="left:475.60px;top:422.34px;font-size:9.5px;color:#333;transform:scaleX(0.9896);">8675309</div>
<div class="t" id="t138" style="left:527.30px;top:422.34px;font-size:9.5px;color:#333;transform:scaleX(0.9361);">PUMP</div>
<div class="t" id="t139" style="left:574.00px;top:422.34px;font-size:9.5px;color:#333;transform:scaleX(0.9603);">MEDIUM</div>
<div class="t" id="t140" style="left:664.20px;top:422.34px;font-size:9.5px;color:#333;transform:scaleX(0.9915);">Midland</div>
<div class="t" id="t141" style="left:702.30px;top:422.34px;font-size:9.5px;color:#333;transform:scaleX(0.9984);">/ Building 2 / 5th Floor / Section A01</div>
<div class="t" id="t142" style="left:926.00px;top:422.34px;font-size:9.5px;color:#333;transform:scaleX(0.9684);">0.21 IPS</div>
<div class="t" id="t143" style="left:980.00px;top:422.34px;font-size:9.5px;color:#333;transform:scaleX(0.9684);">0.42 IPS</div>
<div class="t" id="t144" style="left:1032.10px;top:422.34px;font-size:9.5px;color:#333;transform:scaleX(0.9711);">9.94 IPS</div>
<div class="t" id="t145" style="left:1085.40px;top:422.34px;font-size:9.5px;color:#333;transform:scaleX(0.9549);">160 F</div>
<div class="t" id="t146" style="left:1140.20px;top:422.34px;font-size:9.5px;color:#333;transform:scaleX(0.9665);">09:55 am EST</div>
<div class="t" id="t147" style="left:1208.20px;top:422.34px;font-size:9.5px;color:#333;transform:scaleX(0.9166);">10/16/16</div>
<div class="t" id="t148" style="left:293.65px;top:453.00px;font-size:9.5px;color:#333;transform:scaleX(0.9677);">Good</div>
<div class="t" id="t149" style="left:347.30px;top:453.30px;font-size:9.5px;color:#333;transform:scaleX(0.9430);">PUMP101-6</div>
<div class="t" id="t150" style="left:423.00px;top:453.30px;font-size:9.5px;color:#333;transform:scaleX(0.9253);">9765F051</div>
<div class="t" id="t151" style="left:475.60px;top:453.30px;font-size:9.5px;color:#333;transform:scaleX(0.9896);">8675309</div>
<div class="t" id="t152" style="left:527.30px;top:453.30px;font-size:9.5px;color:#333;transform:scaleX(0.9361);">PUMP</div>
<div class="t" id="t153" style="left:582.75px;top:453.30px;font-size:9.5px;color:#333;transform:scaleX(0.9011);">LOW</div>
<div class="t" id="t154" style="left:664.20px;top:453.30px;font-size:9.5px;color:#333;transform:scaleX(0.9915);">Midland</div>
<div class="t" id="t155" style="left:702.30px;top:453.30px;font-size:9.5px;color:#333;transform:scaleX(0.9984);">/ Building 2 / 5th Floor / Section A01</div>
<div class="t" id="t156" style="left:926.00px;top:453.30px;font-size:9.5px;color:#333;transform:scaleX(0.9684);">0.21 IPS</div>
<div class="t" id="t157" style="left:980.00px;top:453.30px;font-size:9.5px;color:#333;transform:scaleX(0.9684);">0.42 IPS</div>
<div class="t" id="t158" style="left:1032.10px;top:453.30px;font-size:9.5px;color:#333;transform:scaleX(0.9711);">9.94 IPS</div>
<div class="t" id="t159" style="left:1085.40px;top:453.30px;font-size:9.5px;color:#333;transform:scaleX(0.9549);">160 F</div>
<div class="t" id="t160" style="left:1140.20px;top:453.30px;font-size:9.5px;color:#333;transform:scaleX(0.9665);">09:55 am EST</div>
<div class="t" id="t161" style="left:1208.20px;top:453.30px;font-size:9.5px;color:#333;transform:scaleX(0.9166);">10/16/16</div>
<div class="b" style="left:249.7px;top:478.74px;width:1086px;height:30.2px;background:#f8f8f8;"></div>
<div class="t" id="t163" style="left:293.65px;top:483.96px;font-size:9.5px;color:#333;transform:scaleX(0.9677);">Good</div>
<div class="t" id="t164" style="left:347.30px;top:484.26px;font-size:9.5px;color:#333;transform:scaleX(0.9430);">PUMP101-6</div>
<div class="t" id="t165" style="left:423.00px;top:484.26px;font-size:9.5px;color:#333;transform:scaleX(0.9253);">9765F051</div>
<div class="t" id="t166" style="left:475.60px;top:484.26px;font-size:9.5px;color:#333;transform:scaleX(0.9896);">8675309</div>
<div class="t" id="t167" style="left:527.30px;top:484.26px;font-size:9.5px;color:#333;transform:scaleX(0.9361);">PUMP</div>
<div class="t" id="t168" style="left:582.75px;top:484.26px;font-size:9.5px;color:#333;transform:scaleX(0.9011);">LOW</div>
<div class="t" id="t169" style="left:664.20px;top:484.26px;font-size:9.5px;color:#333;transform:scaleX(0.9915);">Midland</div>
<div class="t" id="t170" style="left:702.30px;top:484.26px;font-size:9.5px;color:#333;transform:scaleX(0.9984);">/ Building 2 / 5th Floor / Section A01</div>
<div class="t" id="t171" style="left:926.00px;top:484.26px;font-size:9.5px;color:#333;transform:scaleX(0.9684);">0.21 IPS</div>
<div class="t" id="t172" style="left:980.00px;top:484.26px;font-size:9.5px;color:#333;transform:scaleX(0.9684);">0.42 IPS</div>
<div class="t" id="t173" style="left:1032.10px;top:484.26px;font-size:9.5px;color:#333;transform:scaleX(0.9711);">9.94 IPS</div>
<div class="t" id="t174" style="left:1085.40px;top:484.26px;font-size:9.5px;color:#333;transform:scaleX(0.9549);">160 F</div>
<div class="t" id="t175" style="left:1140.20px;top:484.26px;font-size:9.5px;color:#333;transform:scaleX(0.9665);">09:55 am EST</div>
<div class="t" id="t176" style="left:1208.20px;top:484.26px;font-size:9.5px;color:#333;transform:scaleX(0.9166);">10/16/16</div>
<div class="t" id="t177" style="left:293.65px;top:514.92px;font-size:9.5px;color:#333;transform:scaleX(0.9677);">Good</div>
<div class="t" id="t178" style="left:347.30px;top:515.22px;font-size:9.5px;color:#333;transform:scaleX(0.9430);">PUMP101-6</div>
<div class="t" id="t179" style="left:423.00px;top:515.22px;font-size:9.5px;color:#333;transform:scaleX(0.9253);">9765F051</div>
<div class="t" id="t180" style="left:475.60px;top:515.22px;font-size:9.5px;color:#333;transform:scaleX(0.9896);">8675309</div>
<div class="t" id="t181" style="left:527.30px;top:515.22px;font-size:9.5px;color:#333;transform:scaleX(0.9361);">PUMP</div>
<div class="t" id="t182" style="left:582.75px;top:515.22px;font-size:9.5px;color:#333;transform:scaleX(0.9011);">LOW</div>
<div class="t" id="t183" style="left:664.20px;top:515.22px;font-size:9.5px;color:#333;transform:scaleX(0.9915);">Midland</div>
<div class="t" id="t184" style="left:702.30px;top:515.22px;font-size:9.5px;color:#333;transform:scaleX(0.9984);">/ Building 2 / 5th Floor / Section A01</div>
<div class="t" id="t185" style="left:926.00px;top:515.22px;font-size:9.5px;color:#333;transform:scaleX(0.9684);">0.21 IPS</div>
<div class="t" id="t186" style="left:980.00px;top:515.22px;font-size:9.5px;color:#333;transform:scaleX(0.9684);">0.42 IPS</div>
<div class="t" id="t187" style="left:1032.10px;top:515.22px;font-size:9.5px;color:#333;transform:scaleX(0.9711);">9.94 IPS</div>
<div class="t" id="t188" style="left:1085.40px;top:515.22px;font-size:9.5px;color:#333;transform:scaleX(0.9549);">160 F</div>
<div class="t" id="t189" style="left:1140.20px;top:515.22px;font-size:9.5px;color:#333;transform:scaleX(0.9665);">09:55 am EST</div>
<div class="t" id="t190" style="left:1208.20px;top:515.22px;font-size:9.5px;color:#333;transform:scaleX(0.9166);">10/16/16</div>
<div class="b" style="left:249.7px;top:540.81px;width:1086px;height:30.2px;background:#f8f8f8;"></div>
<div class="t" id="t192" style="left:293.65px;top:545.88px;font-size:9.5px;color:#333;transform:scaleX(0.9677);">Good</div>
<div class="t" id="t193" style="left:347.30px;top:546.18px;font-size:9.5px;color:#333;transform:scaleX(0.9430);">PUMP101-6</div>
<div class="t" id="t194" style="left:423.00px;top:546.18px;font-size:9.5px;color:#333;transform:scaleX(0.9253);">9765F051</div>
<div class="t" id="t195" style="left:475.60px;top:546.18px;font-size:9.5px;color:#333;transform:scaleX(0.9896);">8675309</div>
<div class="t" id="t196" style="left:527.30px;top:546.18px;font-size:9.5px;color:#333;transform:scaleX(0.9361);">PUMP</div>
<div class="t" id="t197" style="left:582.75px;top:546.18px;font-size:9.5px;color:#333;transform:scaleX(0.9011);">LOW</div>
<div class="t" id="t198" style="left:664.20px;top:546.18px;font-size:9.5px;color:#333;transform:scaleX(0.9915);">Midland</div>
<div class="t" id="t199" style="left:702.30px;top:546.18px;font-size:9.5px;color:#333;transform:scaleX(0.9984);">/ Building 2 / 5th Floor / Section A01</div>
<div class="t" id="t200" style="left:926.00px;top:546.18px;font-size:9.5px;color:#333;transform:scaleX(0.9684);">0.21 IPS</div>
<div class="t" id="t201" style="left:980.00px;top:546.18px;font-size:9.5px;color:#333;transform:scaleX(0.9684);">0.42 IPS</div>
<div class="t" id="t202" style="left:1032.10px;top:546.18px;font-size:9.5px;color:#333;transform:scaleX(0.9711);">9.94 IPS</div>
<div class="t" id="t203" style="left:1085.40px;top:546.18px;font-size:9.5px;color:#333;transform:scaleX(0.9549);">160 F</div>
<div class="t" id="t204" style="left:1140.20px;top:546.18px;font-size:9.5px;color:#333;transform:scaleX(0.9665);">09:55 am EST</div>
<div class="t" id="t205" style="left:1208.20px;top:546.18px;font-size:9.5px;color:#333;transform:scaleX(0.9166);">10/16/16</div>
<div class="t" id="t206" style="left:293.65px;top:576.84px;font-size:9.5px;color:#333;transform:scaleX(0.9677);">Good</div>
<div class="t" id="t207" style="left:347.30px;top:577.14px;font-size:9.5px;color:#333;transform:scaleX(0.9430);">PUMP101-6</div>
<div class="t" id="t208" style="left:423.00px;top:577.14px;font-size:9.5px;color:#333;transform:scaleX(0.9253);">9765F051</div>
<div class="t" id="t209" style="left:475.60px;top:577.14px;font-size:9.5px;color:#333;transform:scaleX(0.9896);">8675309</div>
<div class="t" id="t210" style="left:527.30px;top:577.14px;font-size:9.5px;color:#333;transform:scaleX(0.9361);">PUMP</div>
<div class="t" id="t211" style="left:582.75px;top:577.14px;font-size:9.5px;color:#333;transform:scaleX(0.9011);">LOW</div>
<div class="t" id="t212" style="left:664.20px;top:577.14px;font-size:9.5px;color:#333;transform:scaleX(0.9915);">Midland</div>
<div class="t" id="t213" style="left:702.30px;top:577.14px;font-size:9.5px;color:#333;transform:scaleX(0.9984);">/ Building 2 / 5th Floor / Section A01</div>
<div class="t" id="t214" style="left:926.00px;top:577.14px;font-size:9.5px;color:#333;transform:scaleX(0.9684);">0.21 IPS</div>
<div class="t" id="t215" style="left:980.00px;top:577.14px;font-size:9.5px;color:#333;transform:scaleX(0.9684);">0.42 IPS</div>
<div class="t" id="t216" style="left:1032.10px;top:577.14px;font-size:9.5px;color:#333;transform:scaleX(0.9711);">9.94 IPS</div>
<div class="t" id="t217" style="left:1085.40px;top:577.14px;font-size:9.5px;color:#333;transform:scaleX(0.9549);">160 F</div>
<div class="t" id="t218" style="left:1140.20px;top:577.14px;font-size:9.5px;color:#333;transform:scaleX(0.9665);">09:55 am EST</div>
<div class="t" id="t219" style="left:1208.20px;top:577.14px;font-size:9.5px;color:#333;transform:scaleX(0.9166);">10/16/16</div>
<div class="b" style="left:249.7px;top:602.88px;width:1086px;height:30.2px;background:#f8f8f8;"></div>
<div class="t" id="t221" style="left:293.65px;top:607.80px;font-size:9.5px;color:#333;transform:scaleX(0.9677);">Good</div>
<div class="t" id="t222" style="left:347.30px;top:608.10px;font-size:9.5px;color:#333;transform:scaleX(0.9430);">PUMP101-6</div>
<div class="t" id="t223" style="left:423.00px;top:608.10px;font-size:9.5px;color:#333;transform:scaleX(0.9253);">9765F051</div>
<div class="t" id="t224" style="left:475.60px;top:608.10px;font-size:9.5px;color:#333;transform:scaleX(0.9896);">8675309</div>
<div class="t" id="t225" style="left:527.30px;top:608.10px;font-size:9.5px;color:#333;transform:scaleX(0.9361);">PUMP</div>
<div class="t" id="t226" style="left:582.75px;top:608.10px;font-size:9.5px;color:#333;transform:scaleX(0.9011);">LOW</div>
<div class="t" id="t227" style="left:664.20px;top:608.10px;font-size:9.5px;color:#333;transform:scaleX(0.9915);">Midland</div>
<div class="t" id="t228" style="left:702.30px;top:608.10px;font-size:9.5px;color:#333;transform:scaleX(0.9984);">/ Building 2 / 5th Floor / Section A01</div>
<div class="t" id="t229" style="left:926.00px;top:608.10px;font-size:9.5px;color:#333;transform:scaleX(0.9684);">0.21 IPS</div>
<div class="t" id="t230" style="left:980.00px;top:608.10px;font-size:9.5px;color:#333;transform:scaleX(0.9684);">0.42 IPS</div>
<div class="t" id="t231" style="left:1032.10px;top:608.10px;font-size:9.5px;color:#333;transform:scaleX(0.9711);">9.94 IPS</div>
<div class="t" id="t232" style="left:1085.40px;top:608.10px;font-size:9.5px;color:#333;transform:scaleX(0.9549);">160 F</div>
<div class="t" id="t233" style="left:1140.20px;top:608.10px;font-size:9.5px;color:#333;transform:scaleX(0.9665);">09:55 am EST</div>
<div class="t" id="t234" style="left:1208.20px;top:608.10px;font-size:9.5px;color:#333;transform:scaleX(0.9166);">10/16/16</div>
<div class="t" id="t235" style="left:293.65px;top:638.76px;font-size:9.5px;color:#333;transform:scaleX(0.9677);">Good</div>
<div class="t" id="t236" style="left:347.30px;top:639.06px;font-size:9.5px;color:#333;transform:scaleX(0.9430);">PUMP101-6</div>
<div class="t" id="t237" style="left:423.00px;top:639.06px;font-size:9.5px;color:#333;transform:scaleX(0.9253);">9765F051</div>
<div class="t" id="t238" style="left:475.60px;top:639.06px;font-size:9.5px;color:#333;transform:scaleX(0.9896);">8675309</div>
<div class="t" id="t239" style="left:527.30px;top:639.06px;font-size:9.5px;color:#333;transform:scaleX(0.9361);">PUMP</div>
<div class="t" id="t240" style="left:582.75px;top:639.06px;font-size:9.5px;color:#333;transform:scaleX(0.9011);">LOW</div>
<div class="t" id="t241" style="left:664.20px;top:639.06px;font-size:9.5px;color:#333;transform:scaleX(0.9915);">Midland</div>
<div class="t" id="t242" style="left:702.30px;top:639.06px;font-size:9.5px;color:#333;transform:scaleX(0.9984);">/ Building 2 / 5th Floor / Section A01</div>
<div class="t" id="t243" style="left:926.00px;top:639.06px;font-size:9.5px;color:#333;transform:scaleX(0.9684);">0.21 IPS</div>
<div class="t" id="t244" style="left:980.00px;top:639.06px;font-size:9.5px;color:#333;transform:scaleX(0.9684);">0.42 IPS</div>
<div class="t" id="t245" style="left:1032.10px;top:639.06px;font-size:9.5px;color:#333;transform:scaleX(0.9711);">9.94 IPS</div>
<div class="t" id="t246" style="left:1085.40px;top:639.06px;font-size:9.5px;color:#333;transform:scaleX(0.9549);">160 F</div>
<div class="t" id="t247" style="left:1140.20px;top:639.06px;font-size:9.5px;color:#333;transform:scaleX(0.9665);">09:55 am EST</div>
<div class="t" id="t248" style="left:1208.20px;top:639.06px;font-size:9.5px;color:#333;transform:scaleX(0.9166);">10/16/16</div>
<div class="b" style="left:249.7px;top:664.95px;width:1086px;height:30.2px;background:#f8f8f8;"></div>
<div class="t" id="t250" style="left:293.65px;top:669.72px;font-size:9.5px;color:#333;transform:scaleX(0.9677);">Good</div>
<div class="t" id="t251" style="left:347.30px;top:670.02px;font-size:9.5px;color:#333;transform:scaleX(0.9430);">PUMP101-6</div>
<div class="t" id="t252" style="left:423.00px;top:670.02px;font-size:9.5px;color:#333;transform:scaleX(0.9253);">9765F051</div>
<div class="t" id="t253" style="left:475.60px;top:670.02px;font-size:9.5px;color:#333;transform:scaleX(0.9896);">8675309</div>
<div class="t" id="t254" style="left:527.30px;top:670.02px;font-size:9.5px;color:#333;transform:scaleX(0.9361);">PUMP</div>
<div class="t" id="t255" style="left:582.75px;top:670.02px;font-size:9.5px;color:#333;transform:scaleX(0.9011);">LOW</div>
<div class="t" id="t256" style="left:664.20px;top:670.02px;font-size:9.5px;color:#333;transform:scaleX(0.9915);">Midland</div>
<div class="t" id="t257" style="left:702.30px;top:670.02px;font-size:9.5px;color:#333;transform:scaleX(0.9984);">/ Building 2 / 5th Floor / Section A01</div>
<div class="t" id="t258" style="left:926.00px;top:670.02px;font-size:9.5px;color:#333;transform:scaleX(0.9684);">0.21 IPS</div>
<div class="t" id="t259" style="left:980.00px;top:670.02px;font-size:9.5px;color:#333;transform:scaleX(0.9684);">0.42 IPS</div>
<div class="t" id="t260" style="left:1032.10px;top:670.02px;font-size:9.5px;color:#333;transform:scaleX(0.9711);">9.94 IPS</div>
<div class="t" id="t261" style="left:1085.40px;top:670.02px;font-size:9.5px;color:#333;transform:scaleX(0.9549);">160 F</div>
<div class="t" id="t262" style="left:1140.20px;top:670.02px;font-size:9.5px;color:#333;transform:scaleX(0.9665);">09:55 am EST</div>
<div class="t" id="t263" style="left:1208.20px;top:670.02px;font-size:9.5px;color:#333;transform:scaleX(0.9166);">10/16/16</div>
<div class="t bd" id="t264" style="left:107.20px;top:2.24px;font-size:11.29px;color:#ff0f5f;font-weight:700;transform:scaleX(0.7005);">18</div>
<div class="t med" id="t265" style="left:168.70px;top:1.94px;font-size:12.0px;color:#ff0f5f;transform:scaleX(1.0383);">Helvetica Neue, 20pt, #dfe5ea, normal, &lt;i&gt;i-&lt;/i&gt;</div>
<div class="t bd" id="t266" style="left:32.50px;top:23.16px;font-size:12.57px;color:#ff0f5f;font-weight:700;transform:scaleX(0.8152);">86</div>
<div class="t bd" id="t267" style="left:175.70px;top:23.16px;font-size:12.57px;color:#ff0f5f;font-weight:700;transform:scaleX(0.8223);">86</div>
<div class="t bd" id="t268" style="left:107.20px;top:38.83px;font-size:10.71px;color:#ff0f5f;font-weight:700;transform:scaleX(0.7391);">18</div>
<div class="t med" id="t269" style="left:281.30px;top:29.77px;font-size:13.14px;color:#ff0f5f;transform:scaleX(0.9381);">Admin Header BKG #253841</div>
<div class="t bd" id="t270" style="left:509.50px;top:20.92px;font-size:12.14px;color:#ff0f5f;font-weight:700;transform:scaleX(0.8667);">50</div>
<div class="t med" id="t271" style="left:593.50px;top:12.44px;font-size:12.71px;color:#ff0f5f;transform:scaleX(0.9751);">Helvetica Neue, 12PT</div>
<div class="t med" id="t272" style="left:600.80px;top:27.14px;font-size:12.71px;color:#ff0f5f;transform:scaleX(0.9893);">#33333, mid aligned</div>
<div class="t bd" id="t273" style="left:858.00px;top:2.30px;font-size:10.86px;color:#ff0f5f;font-weight:700;transform:scaleX(0.7442);">15</div>
<div class="t bd" id="t274" style="left:858.00px;top:38.39px;font-size:11.0px;color:#ff0f5f;font-weight:700;transform:scaleX(0.7347);">15</div>
<div class="t bd" id="t275" style="left:901.80px;top:23.64px;font-size:12.0px;color:#ff0f5f;font-weight:700;transform:scaleX(0.6737);">10</div>
<div class="t med" id="t276" style="left:691.20px;top:59.74px;font-size:12.71px;color:#ff0f5f;transform:scaleX(0.9663);">Button BKG #dfe5ea</div>
<div class="t med" id="t277" style="left:691.20px;top:73.64px;font-size:12.71px;color:#ff0f5f;transform:scaleX(0.9799);">80px x 20 px</div>
<div class="t med" id="t278" style="left:958.30px;top:57.04px;font-size:12.71px;color:#ff0f5f;transform:scaleX(0.9719);">Button BKG #4a5b63</div>
<div class="t med" id="t279" style="left:958.30px;top:71.24px;font-size:12.71px;color:#ff0f5f;transform:scaleX(0.9764);">80px x 20px</div>
<div class="t" id="t280" style="left:1130.30px;top:-0.72px;font-size:9.0px;color:#ff0f5f;font-weight:700;transform:scaleX(1.0368);">5</div>
<div class="t" id="t281" style="left:1161.70px;top:0.45px;font-size:9.86px;color:#ff0f5f;font-weight:700;transform:scaleX(0.9481);">9</div>
<div class="t bd" id="t282" style="left:1116.60px;top:20.39px;font-size:12.29px;color:#ff0f5f;font-weight:700;transform:scaleX(0.6144);">10</div>
<div class="t bd" id="t283" style="left:1139.00px;top:18.73px;font-size:10.71px;color:#ff0f5f;font-weight:700;transform:scaleX(0.6887);">15</div>
<div class="t" id="t284" style="left:1031.70px;top:40.78px;font-size:9.0px;color:#ff0f5f;font-weight:700;transform:scaleX(0.9213);">40px x 1px, #87949a</div>
<div class="t" id="t285" style="left:1130.30px;top:43.08px;font-size:9.0px;color:#ff0f5f;font-weight:700;transform:scaleX(1.0368);">5</div>
<div class="t bd" id="t286" style="left:1161.70px;top:39.65px;font-size:10.57px;color:#ff0f5f;font-weight:700;transform:scaleX(0.8851);">9</div>
<div class="t" id="t287" style="left:1180.50px;top:19.87px;font-size:10.43px;color:#ff0f5f;font-weight:700;transform:scaleX(0.6296);">15</div>
<div class="t" id="t288" style="left:1176.70px;top:41.90px;font-size:9.57px;color:#ff0f5f;font-weight:700;transform:scaleX(0.8347);">16 x 16 .png</div>
<div class="t" id="t289" style="left:1195.80px;top:3.07px;font-size:10.43px;color:#ff0f5f;font-weight:700;transform:scaleX(0.8216);">MIN</div>
<div class="t bd" id="t290" style="left:1199.50px;top:15.23px;font-size:10.71px;color:#ff0f5f;font-weight:700;transform:scaleX(0.6803);">10</div>
<div class="t" id="t291" style="left:1238.00px;top:3.07px;font-size:10.43px;color:#ff0f5f;font-weight:700;transform:scaleX(0.8216);">MIN</div>
<div class="t bd" id="t292" style="left:1241.30px;top:15.23px;font-size:10.71px;color:#ff0f5f;font-weight:700;transform:scaleX(0.7055);">10</div>
<div class="t" id="t293" style="left:1318.70px;top:3.07px;font-size:10.43px;color:#ff0f5f;font-weight:700;transform:scaleX(0.8216);">MIN</div>
<div class="t bd" id="t294" style="left:1322.60px;top:15.23px;font-size:10.71px;color:#ff0f5f;font-weight:700;transform:scaleX(0.6635);">10</div>
<div class="t" id="t295" style="left:1344.90px;top:3.07px;font-size:10.43px;color:#ff0f5f;font-weight:700;transform:scaleX(0.8216);">MIN</div>
<div class="t bd" id="t296" style="left:1348.10px;top:15.23px;font-size:10.71px;color:#ff0f5f;font-weight:700;transform:scaleX(0.6803);">15</div>
<div class="t" id="t297" style="left:1191.40px;top:60.51px;font-size:12.86px;color:#ff0f5f;transform:scaleX(0.7603);">Helvetica Neue, 12pt #bcbcbc</div>
<div class="t" id="t298" style="left:1248.30px;top:78.79px;font-size:11.11px;color:#ff0f5f;transform:scaleX(0.9000);">down triangle. gray.png</div>
<div class="t" id="t299" style="left:23.70px;top:52.71px;font-size:8.61px;color:#ff0f5f;font-weight:700;transform:scaleX(0.8067);">6px rounded corner</div>
<div class="t" id="t300" style="left:107.60px;top:52.30px;font-size:8.86px;color:#ff0f5f;transform:scaleX(0.7619);">10</div>
<div class="t" id="t301" style="left:145.50px;top:52.49px;font-size:8.75px;color:#ff0f5f;font-weight:700;transform:scaleX(1.0254);">#d9d9d9</div>
<div class="t" id="t302" style="left:0.00px;top:81.54px;font-size:8.57px;color:#ff0f5f;transform:scaleX(0.8813);">10</div>
<div class="t" id="t303" style="left:83.60px;top:100.93px;font-size:8.47px;color:#ff0f5f;font-weight:700;transform:scaleX(1.0142);">#f4f4f4</div>
<div class="t" id="t304" style="left:159.20px;top:64.74px;font-size:9.17px;color:#ff0f5f;font-weight:700;transform:scaleX(0.7927);">Helvetica #9pt, #000</div>
<div class="t" id="t305" style="left:219.80px;top:81.01px;font-size:8.14px;color:#ff0f5f;font-weight:700;transform:scaleX(0.8290);">10</div>
<div class="t" id="t306" style="left:188.20px;top:88.54px;font-size:9.17px;color:#ff0f5f;font-weight:700;transform:scaleX(0.8082);">Helvetica #9pt, #014286</div>
<div class="t" id="t307" style="left:24.00px;top:119.48px;font-size:9.71px;color:#ff0f5f;font-weight:700;transform:scaleX(0.7759);">COMPANY LOGO 100 X 50, block is 200 x 50</div>
<div class="t" id="t308" style="left:29.10px;top:129.71px;font-size:10.14px;color:#ff0f5f;font-weight:700;transform:scaleX(0.8393);">“address-card-o”</div>
<div class="t" id="t309" style="left:0.00px;top:141.13px;font-size:9.29px;color:#ff0f5f;transform:scaleX(0.8230);">10</div>
<div class="t" id="t310" style="left:25.40px;top:163.26px;font-size:8.43px;color:#ff0f5f;font-weight:700;transform:scaleX(0.8960);">5</div>
<div class="t bd" id="t311" style="left:100.30px;top:142.06px;font-size:10.56px;color:#ff0f5f;font-weight:700;transform:scaleX(0.8490);">Helvetica #11pt,</div>
<div class="t bd" id="t312" style="left:100.30px;top:154.77px;font-size:11.14px;color:#ff0f5f;font-weight:700;transform:scaleX(0.8138);">#333333, Bold</div>
<div class="t" id="t313" style="left:8.10px;top:195.41px;font-size:10.14px;color:#ff0f5f;font-weight:700;transform:scaleX(0.7908);">“industry”</div>
<div class="t bd" id="t314" style="left:107.40px;top:221.49px;font-size:11.11px;color:#ff0f5f;font-weight:700;transform:scaleX(0.8218);">Helvetica #11pt, #333333</div>
<div class="t" id="t315" style="left:45.50px;top:243.63px;font-size:9.29px;color:#ff0f5f;font-weight:700;transform:scaleX(0.9474);">5</div>
<div class="t bd" id="t316" style="left:8.80px;top:253.43px;font-size:10.83px;color:#ff0f5f;font-weight:700;transform:scaleX(0.8495);">icons  16 x 16 #333333</div>
<div class="t bd" id="t317" style="left:13.70px;top:274.31px;font-size:10.97px;color:#ff0f5f;font-weight:700;transform:scaleX(0.7661);">“location-arrow”</div>
<div class="t bd" id="t318" style="left:10.70px;top:371.31px;font-size:10.5px;color:#ff0f5f;font-weight:700;transform:scaleX(0.7914);">“map”</div>
<div class="t" id="t319" style="left:78.50px;top:373.10px;font-size:8.86px;color:#ff0f5f;font-weight:700;transform:scaleX(0.7619);">12</div>
<div class="t" id="t320" style="left:34.80px;top:419.33px;font-size:7.88px;color:#ff0f5f;font-weight:700;transform:scaleX(0.9384);">20 px</div>
<div class="t" id="t321" style="left:34.80px;top:429.69px;font-size:9.58px;color:#ff0f5f;font-weight:700;transform:scaleX(0.7482);">indent</div>
<div class="t" id="t322" style="left:83.40px;top:418.58px;font-size:9.0px;color:#ff0f5f;font-weight:700;transform:scaleX(0.7838);">12</div>
<div class="t" id="t323" style="left:83.40px;top:438.08px;font-size:9.0px;color:#ff0f5f;font-weight:700;transform:scaleX(0.7838);">12</div>
<div class="t" id="t324" style="left:83.40px;top:458.08px;font-size:9.0px;color:#ff0f5f;font-weight:700;transform:scaleX(0.7838);">12</div>
<div class="t" id="t325" style="left:83.40px;top:477.98px;font-size:9.0px;color:#ff0f5f;font-weight:700;transform:scaleX(0.7838);">12</div>
<div class="t" id="t326" style="left:83.40px;top:497.78px;font-size:9.0px;color:#ff0f5f;font-weight:700;transform:scaleX(0.7838);">12</div>
<div class="t" id="t327" style="left:272.80px;top:79.87px;font-size:7.71px;color:#ff0f5f;font-weight:700;transform:scaleX(1.0259);">30</div>
<div class="t bd" id="t328" style="left:349.30px;top:92.84px;font-size:13.89px;color:#ff0f5f;font-weight:700;transform:scaleX(0.6562);">Helvetica #12pt, #333333</div>
<div class="t" id="t329" style="left:482.80px;top:53.25px;font-size:9.86px;color:#ff0f5f;transform:scaleX(0.7121);">10</div>
<div class="t" id="t330" style="left:514.90px;top:83.45px;font-size:9.86px;color:#ff0f5f;font-weight:700;transform:scaleX(0.7582);">Helvetica #9pt, #333333</div>
<div class="t" id="t331" style="left:233.00px;top:146.63px;font-size:10.71px;color:#ff0f5f;transform:scaleX(0.7559);">15</div>
<div class="t" id="t332" style="left:370.00px;top:225.03px;font-size:10.71px;color:#ff0f5f;transform:scaleX(0.7895);">15</div>
<div class="t med" id="t333" style="left:708.30px;top:95.95px;font-size:10.69px;color:#ff0f5f;transform:scaleX(0.8782);">6px rounded corner</div>
<div class="t med" id="t334" style="left:751.70px;top:121.94px;font-size:13.06px;color:#ff0f5f;transform:scaleX(0.7221);">#c2c2c2</div>
<div class="t med" id="t335" style="left:751.70px;top:135.37px;font-size:11.25px;color:#ff0f5f;transform:scaleX(0.8420);">1px border,</div>
<div class="t med" id="t336" style="left:751.70px;top:148.19px;font-size:12.29px;color:#ff0f5f;transform:scaleX(0.7681);">NO drop shadow</div>
<div class="t" id="t337" style="left:1354.40px;top:164.13px;font-size:10.0px;color:#ff0f5f;transform:scaleX(1.0427);">10</div>
<div class="t bd" id="t338" style="left:1089.00px;top:209.64px;font-size:11.29px;color:#ff0f5f;font-weight:700;transform:scaleX(0.8073);">485</div>
<div class="t" id="t339" style="left:378.80px;top:239.66px;font-size:9.14px;color:#ff0f5f;transform:scaleX(0.8074);">15</div>
<div class="t" id="t340" style="left:564.70px;top:254.53px;font-size:10.71px;color:#ff0f5f;transform:scaleX(0.8063);">550</div>
<div class="t" id="t341" style="left:243.70px;top:262.94px;font-size:8.57px;color:#ff0f5f;transform:scaleX(0.8289);">10</div>
<div class="t" id="t342" style="left:253.90px;top:268.06px;font-size:8.43px;color:#ff0f5f;transform:scaleX(0.8640);">15</div>
<div class="t" id="t343" style="left:418.60px;top:262.94px;font-size:8.57px;color:#ff0f5f;transform:scaleX(0.9652);">30</div>
<div class="t" id="t344" style="left:275.30px;top:272.71px;font-size:9.44px;color:#ff0f5f;transform:scaleX(0.9096);">Helvetica Neue, 12pt #8b8b8b</div>
<div class="t" id="t345" style="left:378.80px;top:283.83px;font-size:9.29px;color:#ff0f5f;transform:scaleX(0.7939);">15</div>
<div class="t" id="t346" style="left:256.10px;top:286.31px;font-size:10.14px;color:#ff0f5f;transform:scaleX(0.8555);">“exclamation-circle”</div>
<div class="t" id="t347" style="left:270.80px;top:317.11px;font-size:10.14px;color:#ff0f5f;transform:scaleX(0.8598);">“exclamation” #ffffff, Bold</div>
<div class="t" id="t348" style="left:388.80px;top:317.15px;font-size:10.57px;color:#ff0f5f;transform:scaleX(0.7830);">5</div>
<div class="t" id="t349" style="left:452.90px;top:317.15px;font-size:10.57px;color:#ff0f5f;transform:scaleX(0.7830);">5</div>
<div class="t" id="t350" style="left:504.80px;top:317.15px;font-size:10.57px;color:#ff0f5f;transform:scaleX(0.7830);">5</div>
<div class="t" id="t351" style="left:448.30px;top:283.71px;font-size:10.14px;color:#ff0f5f;transform:scaleX(0.8446);">Helvetica Neue, 9pt #333333</div>
<div class="t" id="t352" style="left:608.20px;top:282.57px;font-size:10.43px;color:#ff0f5f;transform:scaleX(0.8207);">Down caret mini #333333</div>
<div class="t" id="t353" style="left:640.30px;top:313.10px;font-size:12.17px;color:#ff0f5f;transform:scaleX(0.6931);">“eye”</div>
<div class="t" id="t354" style="left:716.60px;top:302.30px;font-size:10.28px;color:#ff0f5f;transform:scaleX(0.8316);">30px #fafafa</div>
<div class="t" id="t355" style="left:278.90px;top:348.28px;font-size:8.06px;color:#ff0f5f;transform:scaleX(1.0470);">#bb0404</div>
<div class="t" id="t356" style="left:512.00px;top:372.05px;font-size:10.57px;color:#ff0f5f;transform:scaleX(0.7845);">MIN</div>
<div class="t" id="t357" style="left:515.40px;top:384.70px;font-size:9.57px;color:#ff0f5f;transform:scaleX(0.8552);">10</div>
<div class="t" id="t358" style="left:278.10px;top:411.51px;font-size:8.61px;color:#ff0f5f;transform:scaleX(0.9800);">#b37202</div>
<div class="t" id="t359" style="left:289.50px;top:441.95px;font-size:10.69px;color:#ff0f5f;transform:scaleX(0.8135);">Helvetica Neue, 12pt #ffffff, Bold</div>
<div class="t" id="t360" style="left:289.80px;top:498.61px;font-size:10.14px;color:#ff0f5f;transform:scaleX(0.8671);">“check” #ffffff, Bold</div>
<div class="t" id="t361" style="left:614.40px;top:498.61px;font-size:10.14px;color:#ff0f5f;transform:scaleX(0.8607);">“eye-slash”</div>
<div class="t" id="t362" style="left:265.30px;top:529.59px;font-size:11.0px;color:#ff0f5f;transform:scaleX(0.7647);">16 x 16</div>
<div class="t" id="t363" style="left:276.80px;top:625.95px;font-size:10.57px;color:#ff0f5f;transform:scaleX(0.8170);">#168400</div>
<div class="t" id="t364" style="left:377.80px;top:729.17px;font-size:11.14px;color:#ff0f5f;transform:scaleX(0.7596);">15</div>
<div class="t bd" id="t365" style="left:967.10px;top:241.47px;font-size:13.14px;color:#ff0f5f;font-weight:700;transform:scaleX(0.7357);">Button BKG #dfe5ea</div>
<div class="t" id="t366" style="left:967.10px;top:254.69px;font-size:10.29px;color:#ff0f5f;font-weight:700;transform:scaleX(0.9586);">80px x 20px</div>
<div class="t bd" id="t367" style="left:1148.50px;top:237.23px;font-size:10.83px;color:#ff0f5f;font-weight:700;transform:scaleX(0.9190);">Helvetica Neue, 12pt #333333</div>
<div class="t" id="t368" style="left:1155.70px;top:259.89px;font-size:10.29px;color:#ff0f5f;transform:scaleX(0.7694);">10</div>
<div class="t" id="t369" style="left:1245.60px;top:259.89px;font-size:10.29px;color:#ff0f5f;transform:scaleX(0.7694);">10</div>
<div class="t" id="t370" style="left:1338.80px;top:259.89px;font-size:10.29px;color:#ff0f5f;transform:scaleX(0.7694);">10</div>
<div class="t" id="t371" style="left:822.00px;top:274.90px;font-size:10.28px;color:#ff0f5f;transform:scaleX(0.8457);">“fa-search”, 16 x 16, #8b8b8b</div>
<div class="t" id="t372" style="left:1243.40px;top:343.93px;font-size:10.0px;color:#ff0f5f;transform:scaleX(0.8465);">“lock”</div>
<div class="t" id="t373" style="left:1233.20px;top:465.88px;font-size:12.78px;color:#ff0f5f;transform:scaleX(0.6585);">“unlock”</div>
<div class="t" id="t374" style="left:573.90px;top:238.54px;font-size:9.17px;color:#ff0f5f;transform:scaleX(0.9412);">6px rounded corner, 1px border #eeeeee</div>
<svg class="ov" style="z-index:50" width="1366" height="768" viewBox="0 0 1366 768">
<line x1="165.2" y1="10.5" x2="147.26021210707694" y2="22.223029712207154" stroke="#ff0f5f" stroke-width="1.9" stroke-linecap="butt"/>
<polygon points="145.00,23.70 147.13,18.73 150.41,23.75" fill="#ff0f5f"/>
<line x1="26" y1="29" x2="3.6999999999999997" y2="29.0" stroke="#ff0f5f" stroke-width="1.9" stroke-linecap="butt"/>
<polygon points="1.00,29.00 5.50,26.00 5.50,32.00" fill="#ff0f5f"/>
<line x1="48.3" y1="29" x2="82.5" y2="29.0" stroke="#ff0f5f" stroke-width="1.9" stroke-linecap="butt"/>
<polygon points="85.20,29.00 80.70,32.00 80.70,26.00" fill="#ff0f5f"/>
<line x1="171.4" y1="29" x2="146.79999999999998" y2="29.0" stroke="#ff0f5f" stroke-width="1.9" stroke-linecap="butt"/>
<polygon points="144.10,29.00 148.60,26.00 148.60,32.00" fill="#ff0f5f"/>
<line x1="191.6" y1="29" x2="225.8" y2="29.0" stroke="#ff0f5f" stroke-width="1.9" stroke-linecap="butt"/>
<polygon points="228.50,29.00 224.00,32.00 224.00,26.00" fill="#ff0f5f"/>
<line x1="442.8" y1="35.6" x2="461.08769573229745" y2="22.61573603006883" stroke="#ff0f5f" stroke-width="1.9" stroke-linecap="butt"/>
<polygon points="462.80,21.40 461.39,25.46 458.50,21.39" fill="#ff0f5f"/>
<line x1="514.5" y1="18" x2="514.5" y2="4.199999999999999" stroke="#ff0f5f" stroke-width="1.9" stroke-linecap="butt"/>
<polygon points="514.50,1.50 517.50,6.00 511.50,6.00" fill="#ff0f5f"/>
<line x1="514.5" y1="35" x2="514.5" y2="47.3" stroke="#ff0f5f" stroke-width="1.9" stroke-linecap="butt"/>
<polygon points="514.50,50.00 511.50,45.50 517.50,45.50" fill="#ff0f5f"/>
<line x1="715.4" y1="25.5" x2="755.8" y2="25.5" stroke="#ff0f5f" stroke-width="1.9" stroke-linecap="butt"/>
<polygon points="758.50,25.50 754.00,28.50 754.00,22.50" fill="#ff0f5f"/>
<line x1="806.4" y1="61.7" x2="823.1540365315325" y2="35.280173161814126" stroke="#ff0f5f" stroke-width="1.9" stroke-linecap="butt"/>
<polygon points="824.60,33.00 824.72,38.41 819.66,35.19" fill="#ff0f5f"/>
<line x1="892.8" y1="60.2" x2="892.8" y2="38.0" stroke="#ff0f5f" stroke-width="1.9" stroke-linecap="butt"/>
<polygon points="892.80,35.30 895.80,39.80 889.80,39.80" fill="#ff0f5f"/>
<line x1="1115.6" y1="44" x2="1132.3" y2="36.6" stroke="#ff0f5f" stroke-width="1.6" stroke-linecap="butt"/>
<line x1="1175.3" y1="31.8" x2="1185.7" y2="38.7" stroke="#ff0f5f" stroke-width="1.6" stroke-linecap="butt"/>
<line x1="1340.6" y1="0" x2="1340.6" y2="24" stroke="#ff0f5f" stroke-width="1.4" stroke-linecap="butt"/>
<line x1="1267.6" y1="29.4" x2="1267.6" y2="60" stroke="#ff0f5f" stroke-width="1.6" stroke-linecap="butt"/>
<line x1="1337" y1="83.4" x2="1337.0" y2="34.5" stroke="#ff0f5f" stroke-width="1.9" stroke-linecap="butt"/>
<polygon points="1337.00,31.80 1340.00,36.30 1334.00,36.30" fill="#ff0f5f"/>
<line x1="21.7" y1="55" x2="15.037699126222693" y2="59.52084702149175" stroke="#ff0f5f" stroke-width="1.9" stroke-linecap="butt"/>
<polygon points="13.30,60.70 14.79,56.67 17.60,60.80" fill="#ff0f5f"/>
<line x1="187.3" y1="55.4" x2="190.92380278430022" y2="58.134945497585065" stroke="#ff0f5f" stroke-width="1.9" stroke-linecap="butt"/>
<polygon points="192.60,59.40 188.30,59.29 191.31,55.30" fill="#ff0f5f"/>
<line x1="159" y1="67.5" x2="155.6" y2="67.5" stroke="#ff0f5f" stroke-width="1.9" stroke-linecap="butt"/>
<polygon points="153.50,67.50 157.00,65.00 157.00,70.00" fill="#ff0f5f"/>
<line x1="186.4" y1="92.3" x2="179.32697546611112" y2="98.07223841271392" stroke="#ff0f5f" stroke-width="1.9" stroke-linecap="butt"/>
<polygon points="177.70,99.40 178.83,95.25 181.99,99.12" fill="#ff0f5f"/>
<line x1="29.6" y1="135.4" x2="25.410797315499057" y2="138.382144283882" stroke="#ff0f5f" stroke-width="1.9" stroke-linecap="butt"/>
<polygon points="23.70,139.60 25.10,135.53 28.00,139.61" fill="#ff0f5f"/>
<line x1="26.7" y1="161.6" x2="26.7" y2="153.6" stroke="#ff0f5f" stroke-width="1.9" stroke-linecap="butt"/>
<polygon points="26.70,151.50 29.30,155.00 24.10,155.00" fill="#ff0f5f"/>
<line x1="34.7" y1="206.4" x2="36.05476212665875" y2="214.52857275995248" stroke="#ff0f5f" stroke-width="1.9" stroke-linecap="butt"/>
<polygon points="36.40,216.60 33.36,213.56 38.29,212.74" fill="#ff0f5f"/>
<line x1="47.9" y1="240.7" x2="47.9" y2="235.1" stroke="#ff0f5f" stroke-width="1.9" stroke-linecap="butt"/>
<polygon points="47.90,233.00 50.50,236.50 45.30,236.50" fill="#ff0f5f"/>
<line x1="49.8" y1="416.9" x2="49.8" y2="404.90000000000003" stroke="#ff0f5f" stroke-width="1.9" stroke-linecap="butt"/>
<polygon points="49.80,402.80 52.40,406.30 47.20,406.30" fill="#ff0f5f"/>
<line x1="49.2" y1="416.9" x2="66.30000000000001" y2="416.9" stroke="#ff0f5f" stroke-width="1.9" stroke-linecap="butt"/>
<polygon points="68.40,416.90 64.90,419.50 64.90,414.30" fill="#ff0f5f"/>
<line x1="277.5" y1="76.2" x2="277.5" y2="70.89999999999999" stroke="#ff0f5f" stroke-width="1.9" stroke-linecap="butt"/>
<polygon points="277.50,68.80 280.10,72.30 274.90,72.30" fill="#ff0f5f"/>
<line x1="277.5" y1="87.1" x2="277.5" y2="93.10000000000001" stroke="#ff0f5f" stroke-width="1.9" stroke-linecap="butt"/>
<polygon points="277.50,95.20 274.90,91.70 280.10,91.70" fill="#ff0f5f"/>
<line x1="304.5" y1="81.3" x2="288.29147599772585" y2="72.1771695506326" stroke="#ff0f5f" stroke-width="1.9" stroke-linecap="butt"/>
<polygon points="286.20,71.00 291.06,70.52 288.31,75.40" fill="#ff0f5f"/>
<line x1="322.8" y1="75.4" x2="320.1087188297292" y2="68.82131269489362" stroke="#ff0f5f" stroke-width="1.9" stroke-linecap="butt"/>
<polygon points="319.20,66.60 323.31,69.24 318.12,71.36" fill="#ff0f5f"/>
<line x1="369" y1="75.4" x2="369.0" y2="69.0" stroke="#ff0f5f" stroke-width="1.9" stroke-linecap="butt"/>
<polygon points="369.00,66.60 371.80,70.60 366.20,70.60" fill="#ff0f5f"/>
<line x1="436.1" y1="76.3" x2="440.6633497609358" y2="67.8137706200142" stroke="#ff0f5f" stroke-width="1.9" stroke-linecap="butt"/>
<polygon points="441.80,65.70 442.37,70.55 437.44,67.90" fill="#ff0f5f"/>
<line x1="345.6" y1="99.1" x2="336.5737518361131" y2="100.44601946303575" stroke="#ff0f5f" stroke-width="1.9" stroke-linecap="butt"/>
<polygon points="334.20,100.80 337.74,97.44 338.57,102.98" fill="#ff0f5f"/>
<line x1="576.9" y1="81.4" x2="579.1337771564081" y2="73.42222444139978" stroke="#ff0f5f" stroke-width="1.9" stroke-linecap="butt"/>
<polygon points="579.70,71.40 581.26,75.47 576.25,74.07" fill="#ff0f5f"/>
<line x1="702.5" y1="150" x2="702.5" y2="113.9" stroke="#ff0f5f" stroke-width="1.9" stroke-linecap="butt"/>
<polygon points="702.50,111.50 705.30,115.50 699.70,115.50" fill="#ff0f5f"/>
<defs><linearGradient id="fg1" gradientUnits="userSpaceOnUse" x1="702.5" y1="150" x2="702.5" y2="159"><stop offset="0" stop-color="#ff0f5f" stop-opacity="1"/><stop offset="1" stop-color="#ff0f5f" stop-opacity="0"/></linearGradient></defs>
<rect x="701.55" y="150" width="1.9" height="9" fill="url(#fg1)"/>
<line x1="702.5" y1="181.6" x2="702.5" y2="216.0" stroke="#ff0f5f" stroke-width="1.9" stroke-linecap="butt"/>
<polygon points="702.50,218.40 699.70,214.40 705.30,214.40" fill="#ff0f5f"/>
<defs><linearGradient id="fg2" gradientUnits="userSpaceOnUse" x1="702.5" y1="181.6" x2="702.5" y2="173"><stop offset="0" stop-color="#ff0f5f" stop-opacity="1"/><stop offset="1" stop-color="#ff0f5f" stop-opacity="0"/></linearGradient></defs>
<rect x="701.55" y="173" width="1.9" height="8.599999999999994" fill="url(#fg2)"/>
<line x1="750.8" y1="140.8" x2="732.6999999999999" y2="140.8" stroke="#ff0f5f" stroke-width="1.9" stroke-linecap="butt"/>
<polygon points="730.30,140.80 734.30,138.00 734.30,143.60" fill="#ff0f5f"/>
<line x1="1078.5" y1="214.9" x2="873.8000000000001" y2="214.9" stroke="#ff0f5f" stroke-width="1.9" stroke-linecap="butt"/>
<polygon points="871.10,214.90 875.60,211.90 875.60,217.90" fill="#ff0f5f"/>
<defs><linearGradient id="fg3" gradientUnits="userSpaceOnUse" x1="1078.5" y1="214.9" x2="1088.5" y2="214.9"><stop offset="0" stop-color="#ff0f5f" stop-opacity="1"/><stop offset="1" stop-color="#ff0f5f" stop-opacity="0"/></linearGradient></defs>
<rect x="1078.5" y="213.95000000000002" width="10.0" height="1.9" fill="url(#fg3)"/>
<line x1="1115.5" y1="214.9" x2="1348.0" y2="214.9" stroke="#ff0f5f" stroke-width="1.9" stroke-linecap="butt"/>
<polygon points="1350.70,214.90 1346.20,217.90 1346.20,211.90" fill="#ff0f5f"/>
<defs><linearGradient id="fg4" gradientUnits="userSpaceOnUse" x1="1115.5" y1="214.9" x2="1104.5" y2="214.9"><stop offset="0" stop-color="#ff0f5f" stop-opacity="1"/><stop offset="1" stop-color="#ff0f5f" stop-opacity="0"/></linearGradient></defs>
<rect x="1104.5" y="213.95000000000002" width="11.0" height="1.9" fill="url(#fg4)"/>
<line x1="552.5" y1="259.8" x2="254.79999999999998" y2="259.8" stroke="#ff0f5f" stroke-width="1.9" stroke-linecap="butt"/>
<polygon points="252.10,259.80 256.60,256.80 256.60,262.80" fill="#ff0f5f"/>
<defs><linearGradient id="fg5" gradientUnits="userSpaceOnUse" x1="552.5" y1="259.8" x2="562" y2="259.8"><stop offset="0" stop-color="#ff0f5f" stop-opacity="1"/><stop offset="1" stop-color="#ff0f5f" stop-opacity="0"/></linearGradient></defs>
<rect x="552.5" y="258.85" width="9.5" height="1.9" fill="url(#fg5)"/>
<line x1="585.5" y1="259.8" x2="806.3" y2="259.8" stroke="#ff0f5f" stroke-width="1.9" stroke-linecap="butt"/>
<polygon points="809.00,259.80 804.50,262.80 804.50,256.80" fill="#ff0f5f"/>
<defs><linearGradient id="fg6" gradientUnits="userSpaceOnUse" x1="585.5" y1="259.8" x2="577" y2="259.8"><stop offset="0" stop-color="#ff0f5f" stop-opacity="1"/><stop offset="1" stop-color="#ff0f5f" stop-opacity="0"/></linearGradient></defs>
<rect x="577" y="258.85" width="8.5" height="1.9" fill="url(#fg6)"/>
<line x1="423.6" y1="259" x2="423.6" y2="253.6" stroke="#ff0f5f" stroke-width="1.9" stroke-linecap="butt"/>
<polygon points="423.60,251.50 426.20,255.00 421.00,255.00" fill="#ff0f5f"/>
<line x1="423.6" y1="271.7" x2="423.6" y2="278.7" stroke="#ff0f5f" stroke-width="1.9" stroke-linecap="butt"/>
<polygon points="423.60,280.80 421.00,277.30 426.20,277.30" fill="#ff0f5f"/>
<line x1="275.3" y1="295.5" x2="272.7804410863978" y2="299.69926485600365" stroke="#ff0f5f" stroke-width="1.9" stroke-linecap="butt"/>
<polygon points="271.70,301.50 271.36,297.21 275.64,299.79" fill="#ff0f5f"/>
<line x1="391.2" y1="317" x2="391.2" y2="311.90000000000003" stroke="#ff0f5f" stroke-width="1.9" stroke-linecap="butt"/>
<polygon points="391.20,309.80 393.70,313.30 388.70,313.30" fill="#ff0f5f"/>
<line x1="455.3" y1="317" x2="455.3" y2="311.90000000000003" stroke="#ff0f5f" stroke-width="1.9" stroke-linecap="butt"/>
<polygon points="455.30,309.80 457.80,313.30 452.80,313.30" fill="#ff0f5f"/>
<line x1="507.2" y1="317" x2="507.2" y2="311.90000000000003" stroke="#ff0f5f" stroke-width="1.9" stroke-linecap="butt"/>
<polygon points="507.20,309.80 509.70,313.30 504.70,313.30" fill="#ff0f5f"/>
<line x1="490.7" y1="293.7" x2="492.2117604149711" y2="301.7362001006356" stroke="#ff0f5f" stroke-width="1.9" stroke-linecap="butt"/>
<polygon points="492.60,303.80 489.50,300.82 494.41,299.90" fill="#ff0f5f"/>
<line x1="525.9" y1="292.8" x2="533.6321006096491" y2="301.8066226881627" stroke="#ff0f5f" stroke-width="1.9" stroke-linecap="butt"/>
<polygon points="535.00,303.40 530.82,302.37 534.62,299.12" fill="#ff0f5f"/>
<line x1="627.5" y1="292.8" x2="616.7092622876037" y2="303.23981941280624" stroke="#ff0f5f" stroke-width="1.9" stroke-linecap="butt"/>
<polygon points="615.20,304.70 615.98,300.47 619.45,304.06" fill="#ff0f5f"/>
<line x1="704.3" y1="294.6" x2="704.3" y2="303.5" stroke="#ff0f5f" stroke-width="1.9" stroke-linecap="butt"/>
<polygon points="704.30,305.60 701.80,302.10 706.80,302.10" fill="#ff0f5f"/>
<line x1="740.3" y1="299.7" x2="740.3" y2="295.1" stroke="#ff0f5f" stroke-width="1.9" stroke-linecap="butt"/>
<polygon points="740.30,293.00 742.80,296.50 737.80,296.50" fill="#ff0f5f"/>
<line x1="740.3" y1="315" x2="740.3" y2="320.4" stroke="#ff0f5f" stroke-width="1.9" stroke-linecap="butt"/>
<polygon points="740.30,322.50 737.80,319.00 742.80,319.00" fill="#ff0f5f"/>
<line x1="287.5" y1="345" x2="280.6691434466118" y2="340.6314289484145" stroke="#ff0f5f" stroke-width="1.9" stroke-linecap="butt"/>
<polygon points="278.90,339.50 283.20,339.28 280.50,343.49" fill="#ff0f5f"/>
<line x1="284" y1="357.5" x2="279.01918069537857" y2="360.99400757189863" stroke="#ff0f5f" stroke-width="1.9" stroke-linecap="butt"/>
<polygon points="277.30,362.20 278.73,358.14 281.60,362.24" fill="#ff0f5f"/>
<line x1="518.6" y1="370.6" x2="518.6" y2="365.40000000000003" stroke="#ff0f5f" stroke-width="1.9" stroke-linecap="butt"/>
<polygon points="518.60,363.30 521.10,366.80 516.10,366.80" fill="#ff0f5f"/>
<line x1="518.8" y1="393.4" x2="518.8" y2="397.3" stroke="#ff0f5f" stroke-width="1.9" stroke-linecap="butt"/>
<polygon points="518.80,399.10 516.50,396.10 521.10,396.10" fill="#ff0f5f"/>
<line x1="286.3" y1="410.3" x2="276.6144351436773" y2="402.2429814469528" stroke="#ff0f5f" stroke-width="1.9" stroke-linecap="butt"/>
<polygon points="275.00,400.90 279.29,401.22 276.09,405.06" fill="#ff0f5f"/>
<line x1="286.5" y1="445.3" x2="275.1060392886899" y2="432.6598248358904" stroke="#ff0f5f" stroke-width="1.9" stroke-linecap="butt"/>
<polygon points="273.70,431.10 277.90,432.03 274.19,435.37" fill="#ff0f5f"/>
<line x1="286.5" y1="500.1" x2="277.1978705428908" y2="494.4852011385017" stroke="#ff0f5f" stroke-width="1.9" stroke-linecap="butt"/>
<polygon points="275.40,493.40 279.69,493.07 277.10,497.35" fill="#ff0f5f"/>
<line x1="281.1" y1="622.7" x2="278.8521761681376" y2="618.8173951995103" stroke="#ff0f5f" stroke-width="1.9" stroke-linecap="butt"/>
<polygon points="277.80,617.00 281.72,618.78 277.39,621.28" fill="#ff0f5f"/>
<line x1="1149.6" y1="246.8" x2="1135.5970562748478" y2="260.80294372515226" stroke="#ff0f5f" stroke-width="1.9" stroke-linecap="butt"/>
<polygon points="1133.90,262.50 1134.75,257.69 1138.71,261.65" fill="#ff0f5f"/>
<line x1="1201.8" y1="244.6" x2="1203.1943080138662" y2="260.80883066119515" stroke="#ff0f5f" stroke-width="1.9" stroke-linecap="butt"/>
<polygon points="1203.40,263.20 1200.27,259.45 1205.85,258.97" fill="#ff0f5f"/>
<line x1="1275" y1="247.9" x2="1283.492727015914" y2="257.3176774829938" stroke="#ff0f5f" stroke-width="1.9" stroke-linecap="butt"/>
<polygon points="1285.10,259.10 1280.34,258.00 1284.50,254.25" fill="#ff0f5f"/>
<line x1="821.7" y1="275.8" x2="803.9028417397625" y2="270.5759585206268" stroke="#ff0f5f" stroke-width="1.9" stroke-linecap="butt"/>
<polygon points="801.60,269.90 806.23,268.34 804.65,273.71" fill="#ff0f5f"/>
<line x1="1266.8" y1="347.5" x2="1285.265017328706" y2="340.2745584365932" stroke="#ff0f5f" stroke-width="1.9" stroke-linecap="butt"/>
<polygon points="1287.50,339.40 1284.80,343.47 1282.75,338.25" fill="#ff0f5f"/>
<line x1="1265.7" y1="471" x2="1285.7266634681826" y2="461.61813963652713" stroke="#ff0f5f" stroke-width="1.9" stroke-linecap="butt"/>
<polygon points="1287.90,460.60 1285.47,464.83 1283.09,459.76" fill="#ff0f5f"/>
<line x1="735" y1="242.2" x2="747.0855910538647" y2="249.24268255656864" stroke="#ff0f5f" stroke-width="1.9" stroke-linecap="butt"/>
<polygon points="748.90,250.30 744.62,250.70 747.13,246.38" fill="#ff0f5f"/>
</svg>
<div class="b" style="left:0;top:51px;width:1366px;height:1px;background:#05b2f2;z-index:60"></div>
<div class="b" style="left:229px;top:0;width:1px;height:768px;background:#05b2f2;z-index:60"></div>
<div class="b" style="left:0;top:742px;width:1366px;height:1px;background:#05b2f2;z-index:60"></div>
<div class="b" style="left:0;top:767px;width:1366px;height:1px;background:#05b2f2;z-index:60"></div>
</body></html>
